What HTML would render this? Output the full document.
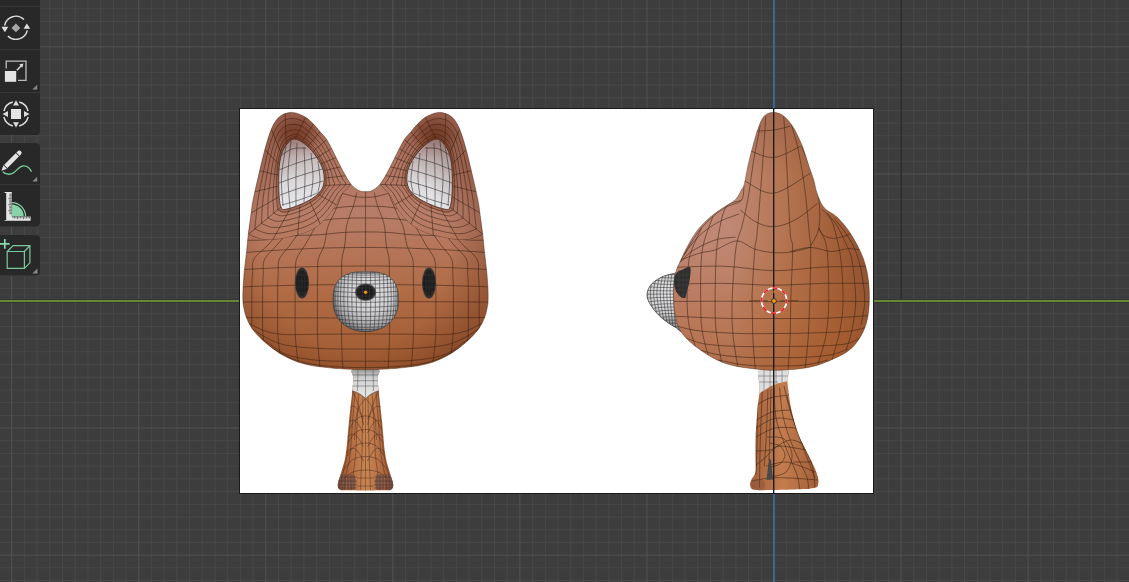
<!DOCTYPE html>
<html><head><meta charset="utf-8"><style>
html,body{margin:0;padding:0;width:1129px;height:582px;overflow:hidden;background:#3d3d3d;}
svg{position:absolute;left:0;top:0;}
</style></head><body>
<svg width="1129" height="582" viewBox="0 0 1129 582">
<rect width="1129" height="582" fill="#3d3d3d"/>
<path d="M-1.00 0V582M24.40 0V582M37.11 0V582M49.81 0V582M62.52 0V582M75.23 0V582M87.93 0V582M100.63 0V582M113.34 0V582M126.04 0V582M151.46 0V582M164.16 0V582M176.87 0V582M189.57 0V582M202.27 0V582M214.98 0V582M227.68 0V582M240.39 0V582M253.10 0V582M278.50 0V582M291.21 0V582M303.92 0V582M316.62 0V582M329.32 0V582M342.03 0V582M354.74 0V582M367.44 0V582M380.14 0V582M405.56 0V582M418.26 0V582M430.96 0V582M443.67 0V582M456.38 0V582M469.08 0V582M481.79 0V582M494.49 0V582M507.19 0V582M532.61 0V582M545.31 0V582M558.01 0V582M570.72 0V582M583.42 0V582M596.13 0V582M608.84 0V582M621.54 0V582M634.25 0V582M659.65 0V582M672.36 0V582M685.07 0V582M697.77 0V582M710.48 0V582M723.18 0V582M735.88 0V582M748.59 0V582M761.29 0V582M786.71 0V582M799.41 0V582M812.12 0V582M824.82 0V582M837.52 0V582M850.23 0V582M862.93 0V582M875.64 0V582M888.35 0V582M913.75 0V582M926.46 0V582M939.16 0V582M951.87 0V582M964.58 0V582M977.28 0V582M989.99 0V582M1002.69 0V582M1015.39 0V582M1040.81 0V582M1053.51 0V582M1066.21 0V582M1078.92 0V582M1091.62 0V582M1104.33 0V582M1117.04 0V582M1129.74 0V582M0 8.79H1129M0 21.49H1129M0 34.19H1129M0 59.60H1129M0 72.31H1129M0 85.01H1129M0 97.72H1129M0 110.43H1129M0 123.13H1129M0 135.84H1129M0 148.54H1129M0 161.25H1129M0 186.66H1129M0 199.36H1129M0 212.06H1129M0 224.77H1129M0 237.47H1129M0 250.18H1129M0 262.88H1129M0 275.59H1129M0 288.30H1129M0 313.70H1129M0 326.41H1129M0 339.12H1129M0 351.82H1129M0 364.52H1129M0 377.23H1129M0 389.94H1129M0 402.64H1129M0 415.35H1129M0 440.75H1129M0 453.46H1129M0 466.16H1129M0 478.87H1129M0 491.57H1129M0 504.28H1129M0 516.99H1129M0 529.69H1129M0 542.39H1129M0 567.81H1129M0 580.51H1129" stroke="#484848" stroke-width="1" fill="none"/>
<path d="M11.70 0V582M138.75 0V582M265.80 0V582M392.85 0V582M519.90 0V582M646.95 0V582M901.05 0V582M1028.10 0V582M0 46.90H1129M0 173.95H1129M0 428.05H1129M0 555.10H1129" stroke="#535353" stroke-width="1" fill="none"/>

<path d="M901.2 0V300" stroke="#2c2c2c" stroke-width="1.6"/>
<rect x="0" y="299" width="1129" height="1" fill="#353535" opacity="0.8"/>
<rect x="0" y="302" width="1129" height="1" fill="#353535" opacity="0.8"/>
<rect x="0" y="300" width="1129" height="2" fill="#618931"/>
<rect x="773" y="0" width="2" height="582" fill="#3f6596"/>

<rect x="239" y="108" width="635" height="386" fill="#1a1a1a"/>
<rect x="240" y="109" width="633" height="384" fill="#ffffff"/>

<defs>
<linearGradient id="gHead" gradientUnits="userSpaceOnUse" x1="0" y1="110" x2="0" y2="372">
<stop offset="0" stop-color="#ac705c"/><stop offset="0.4" stop-color="#b87d68"/><stop offset="0.7" stop-color="#b06b45"/><stop offset="1" stop-color="#a05a30"/>
</linearGradient>
<radialGradient id="gHeadR" gradientUnits="userSpaceOnUse" cx="355" cy="250" r="135" gradientTransform="translate(355 250) scale(1 1.05) translate(-355 -250)">
<stop offset="0.7" stop-color="#3a1000" stop-opacity="0"/><stop offset="1" stop-color="#3a1000" stop-opacity="0.22"/>
</radialGradient>
<linearGradient id="gEar" gradientUnits="userSpaceOnUse" x1="0" y1="135" x2="0" y2="210">
<stop offset="0" stop-color="#a88580"/><stop offset="0.3" stop-color="#c8bcbc"/><stop offset="0.65" stop-color="#dcdadc"/><stop offset="1" stop-color="#e8e8ec"/>
</linearGradient>
<linearGradient id="gSide" gradientUnits="userSpaceOnUse" x1="670" y1="0" x2="872" y2="0">
<stop offset="0" stop-color="#b46f4e"/><stop offset="0.45" stop-color="#b87a5e"/><stop offset="1" stop-color="#9b5433"/>
</linearGradient>
<linearGradient id="gBody" x1="0" y1="0" x2="1" y2="0">
<stop offset="0" stop-color="#a5603a"/><stop offset="0.5" stop-color="#c07a4c"/><stop offset="1" stop-color="#9d5a35"/>
</linearGradient>
<linearGradient id="gNeck" x1="0" y1="0" x2="0" y2="1">
<stop offset="0" stop-color="#a0a0a0"/><stop offset="1" stop-color="#dcdcdc"/>
</linearGradient>
<radialGradient id="gCav"><stop offset="0" stop-color="#5a2008" stop-opacity="0.55"/><stop offset="0.55" stop-color="#5a2008" stop-opacity="0.35"/><stop offset="1" stop-color="#5a2008" stop-opacity="0"/></radialGradient>
<clipPath id="cHead"><path d="M365.5 191.6C363.5 191.6 361.8 192.0 359.4 190.8C357.0 189.6 353.9 187.7 351.1 184.4C348.4 181.1 345.6 176.0 342.9 171.0C340.1 166.0 337.2 159.7 334.6 154.5C332.0 149.3 329.4 143.8 327.0 140.0C324.6 136.2 322.2 134.3 320.0 131.7C317.8 129.1 316.3 126.9 313.9 124.5C311.5 122.1 308.6 119.2 305.7 117.3C302.8 115.4 299.1 114.0 296.4 113.2C293.6 112.4 291.8 112.2 289.2 112.6C286.6 113.0 283.3 114.1 280.9 115.7C278.5 117.3 276.6 119.4 274.7 122.4C272.8 125.4 271.3 129.0 269.6 133.8C267.9 138.6 266.2 144.5 264.4 151.3C262.6 158.1 260.7 166.4 258.8 174.5C256.9 182.6 254.5 192.9 253.1 200.0C251.7 207.1 251.4 211.4 250.6 217.1C249.8 222.8 249.0 228.6 248.3 234.3C247.6 240.0 247.2 245.7 246.6 251.4C246.0 257.1 245.2 262.9 244.6 268.6C244.0 274.3 243.5 280.6 243.2 285.7C242.9 290.8 242.8 295.6 242.9 299.0C243.0 302.4 242.9 303.0 243.5 306.0C244.1 309.0 244.8 313.3 246.2 317.0C247.6 320.7 249.4 324.6 251.7 328.0C254.0 331.4 256.8 334.4 260.0 337.6C263.2 340.8 267.1 344.2 271.0 347.2C274.9 350.2 279.0 353.1 283.4 355.5C287.8 357.9 292.8 360.1 297.1 361.7C301.5 363.3 306.0 364.3 309.5 365.1C313.0 365.9 313.1 365.9 318.0 366.5C322.9 367.1 331.1 368.1 339.0 368.6C346.9 369.2 356.7 369.8 365.5 369.8C374.3 369.8 384.1 369.2 392.0 368.6C399.9 368.1 408.1 367.1 413.0 366.5C417.9 365.9 418.0 365.9 421.5 365.1C425.0 364.3 429.5 363.3 433.9 361.7C438.2 360.1 443.2 357.9 447.6 355.5C452.0 353.1 456.1 350.2 460.0 347.2C463.9 344.2 467.8 340.8 471.0 337.6C474.2 334.4 477.0 331.4 479.3 328.0C481.6 324.6 483.4 320.7 484.8 317.0C486.2 313.3 486.9 309.0 487.5 306.0C488.1 303.0 488.1 302.4 488.1 299.0C488.2 295.6 488.1 290.8 487.8 285.7C487.5 280.6 487.0 274.3 486.4 268.6C485.8 262.9 485.0 257.1 484.4 251.4C483.8 245.7 483.4 240.0 482.7 234.3C482.0 228.6 481.2 222.8 480.4 217.1C479.6 211.4 479.3 207.1 477.9 200.0C476.5 192.9 474.1 182.6 472.2 174.5C470.3 166.4 468.4 158.1 466.6 151.3C464.8 144.5 463.1 138.6 461.4 133.8C459.7 129.0 458.2 125.4 456.3 122.4C454.4 119.4 452.5 117.3 450.1 115.7C447.7 114.1 444.4 113.0 441.8 112.6C439.2 112.2 437.4 112.4 434.6 113.2C431.9 114.0 428.2 115.4 425.3 117.3C422.4 119.2 419.5 122.1 417.1 124.5C414.7 126.9 413.2 129.1 411.0 131.7C408.8 134.3 406.4 136.2 404.0 140.0C401.6 143.8 399.0 149.3 396.4 154.5C393.8 159.7 390.9 166.0 388.1 171.0C385.4 176.0 382.6 181.1 379.9 184.4C377.1 187.7 374.0 189.6 371.6 190.8C369.2 192.0 367.5 191.6 365.5 191.6Z"/></clipPath>
<clipPath id="cEarL"><path d="M248.3 234.3C246.3 231.8 249.2 227.6 249.6 224.3C250.1 221.0 250.5 217.7 251.0 214.3C251.4 211.0 251.8 207.7 252.3 204.4C252.9 201.1 253.5 197.8 254.2 194.5C254.9 191.2 255.7 187.9 256.4 184.7C257.2 181.4 258.0 178.1 258.7 174.9C259.5 171.6 260.2 168.3 261.0 165.1C261.8 161.8 262.5 158.5 263.4 155.3C264.2 152.0 265.0 148.8 266.0 145.5C266.9 142.3 267.8 139.1 268.9 135.9C270.0 132.7 271.0 129.5 272.5 126.5C274.0 123.6 275.6 120.4 278.0 118.1C280.3 115.9 283.5 114.0 286.6 113.2C289.7 112.4 293.3 112.5 296.5 113.2C299.7 113.9 303.5 116.0 305.7 117.3C307.9 118.6 308.5 119.6 309.9 120.8C311.2 122.0 312.6 123.2 313.9 124.5C315.2 125.8 316.3 127.2 317.5 128.6C318.7 130.0 319.8 131.4 321.0 132.8C322.2 134.2 323.5 135.4 324.6 136.8C325.8 138.2 326.8 139.7 327.8 141.3C328.7 142.8 329.5 144.4 330.4 146.1C331.2 147.7 332.0 149.3 332.8 150.9C333.6 152.6 334.5 154.2 335.3 155.8C336.1 157.4 336.9 159.1 337.7 160.7C338.5 162.3 339.3 164.0 340.1 165.6C340.9 167.2 341.7 168.8 342.6 170.4C343.5 172.0 344.4 173.6 345.3 175.2C346.2 176.7 347.2 178.2 348.2 179.8C349.2 181.3 352.2 181.9 351.1 184.4C350.0 186.9 344.2 190.9 341.5 194.7C338.8 198.4 337.5 203.2 334.9 207.1C332.4 211.1 329.5 214.9 326.4 218.3C323.2 221.7 319.7 225.1 315.8 227.6C311.9 230.2 307.5 232.1 303.1 233.6C298.7 235.2 294.0 236.1 289.4 237.1C284.8 238.1 280.2 239.3 275.5 239.7C270.9 240.0 266.0 240.2 261.5 239.3C257.0 238.4 250.3 236.8 248.3 234.3Z"/></clipPath>
<clipPath id="cInnerL"><path d="M281.0 207.1C279.8 204.2 279.2 198.4 278.9 191.7C278.6 185.0 278.6 173.6 279.2 166.9C279.8 160.2 281.0 155.5 282.5 151.5C284.0 147.5 285.9 145.1 288.0 143.0C290.1 140.9 292.0 138.7 295.0 139.0C298.0 139.3 302.4 142.0 306.0 145.0C309.6 148.0 313.6 152.7 316.5 157.0C319.4 161.3 322.2 166.2 323.3 171.0C324.4 175.8 324.5 181.4 323.3 185.5C322.1 189.6 319.6 192.7 316.0 195.8C312.4 198.9 306.6 201.8 301.6 204.0C296.6 206.2 289.5 208.7 286.1 209.2C282.7 209.7 282.2 210.0 281.0 207.1Z"/></clipPath>
</defs>
<g id="front">
<defs><clipPath id="cBody"><path d="M353.2 369.0C349.1 370.5 353.5 374.6 353.4 378.0C353.3 381.4 353.1 382.5 352.4 389.6C351.7 396.8 350.1 410.1 349.0 420.9C347.9 431.7 347.0 445.9 345.7 454.5C344.4 463.1 342.5 467.5 341.2 472.4C339.9 477.3 338.1 481.2 337.8 484.0C337.5 486.8 338.1 488.2 339.5 489.3C340.9 490.4 338.4 490.1 346.0 490.3C353.6 490.5 377.4 490.5 385.0 490.3C392.6 490.1 390.1 490.4 391.5 489.3C392.9 488.2 393.5 486.8 393.2 484.0C392.9 481.2 391.1 477.3 389.8 472.4C388.5 467.5 386.6 463.1 385.3 454.5C384.0 445.9 383.1 431.7 382.0 420.9C380.9 410.1 379.3 396.8 378.6 389.6C377.9 382.5 377.7 381.4 377.6 378.0C377.5 374.6 381.9 370.5 377.8 369.0C373.7 367.5 357.3 367.5 353.2 369.0Z"/></clipPath>
<linearGradient id="gBodyF" gradientUnits="userSpaceOnUse" x1="338" y1="0" x2="394" y2="0"><stop offset="0" stop-color="#94502c"/><stop offset="0.3" stop-color="#bb7448"/><stop offset="0.5" stop-color="#c88452"/><stop offset="0.7" stop-color="#bb7448"/><stop offset="1" stop-color="#94502c"/></linearGradient></defs>
<path d="M353.2 369.0C349.1 370.5 353.5 374.6 353.4 378.0C353.3 381.4 353.1 382.5 352.4 389.6C351.7 396.8 350.1 410.1 349.0 420.9C347.9 431.7 347.0 445.9 345.7 454.5C344.4 463.1 342.5 467.5 341.2 472.4C339.9 477.3 338.1 481.2 337.8 484.0C337.5 486.8 338.1 488.2 339.5 489.3C340.9 490.4 338.4 490.1 346.0 490.3C353.6 490.5 377.4 490.5 385.0 490.3C392.6 490.1 390.1 490.4 391.5 489.3C392.9 488.2 393.5 486.8 393.2 484.0C392.9 481.2 391.1 477.3 389.8 472.4C388.5 467.5 386.6 463.1 385.3 454.5C384.0 445.9 383.1 431.7 382.0 420.9C380.9 410.1 379.3 396.8 378.6 389.6C377.9 382.5 377.7 381.4 377.6 378.0C377.5 374.6 381.9 370.5 377.8 369.0C373.7 367.5 357.3 367.5 353.2 369.0Z" fill="url(#gBodyF)"/>
<g clip-path="url(#cBody)">
<path d="M367.8 389.0C367.9 391.4 368.0 398.6 368.1 403.4C368.2 408.2 368.3 413.0 368.4 417.9C368.5 422.7 368.6 427.5 368.7 432.3C368.7 437.1 368.8 441.9 368.9 446.7C369.0 451.5 369.1 456.3 369.3 461.1C369.5 466.0 369.8 470.8 370.0 475.6C370.2 480.4 370.4 487.6 370.5 490.0M363.2 389.0C363.1 391.4 363.0 398.6 362.9 403.4C362.8 408.2 362.7 413.0 362.6 417.9C362.5 422.7 362.4 427.5 362.3 432.3C362.3 437.1 362.2 441.9 362.1 446.7C362.0 451.5 361.9 456.3 361.7 461.1C361.5 466.0 361.2 470.8 361.0 475.6C360.8 480.4 360.6 487.6 360.5 490.0M372.0 389.0C372.1 391.4 372.5 398.6 372.8 403.4C373.1 408.2 373.3 413.0 373.6 417.9C373.8 422.7 374.0 427.5 374.3 432.3C374.5 437.1 374.6 441.9 374.9 446.7C375.2 451.5 375.5 456.3 376.0 461.1C376.6 466.0 377.5 470.8 378.1 475.6C378.6 480.4 379.1 487.6 379.4 490.0M359.0 389.0C358.9 391.4 358.5 398.6 358.2 403.4C357.9 408.2 357.7 413.0 357.4 417.9C357.2 422.7 357.0 427.5 356.7 432.3C356.5 437.1 356.4 441.9 356.1 446.7C355.8 451.5 355.5 456.3 355.0 461.1C354.4 466.0 353.5 470.8 352.9 475.6C352.4 480.4 351.9 487.6 351.6 490.0M375.7 389.0C375.9 391.4 376.5 398.6 376.9 403.4C377.3 408.2 377.7 413.0 378.1 417.9C378.5 422.7 378.8 427.5 379.2 432.3C379.5 437.1 379.7 441.9 380.2 446.7C380.7 451.5 381.1 456.3 381.9 461.1C382.8 466.0 384.3 470.8 385.1 475.6C386.0 480.4 386.8 487.6 387.1 490.0M355.3 389.0C355.1 391.4 354.5 398.6 354.1 403.4C353.7 408.2 353.3 413.0 352.9 417.9C352.5 422.7 352.2 427.5 351.8 432.3C351.5 437.1 351.3 441.9 350.8 446.7C350.3 451.5 349.9 456.3 349.1 461.1C348.2 466.0 346.7 470.8 345.9 475.6C345.0 480.4 344.2 487.6 343.9 490.0M377.6 389.0C377.9 391.4 378.6 398.6 379.1 403.4C379.6 408.2 380.1 413.0 380.5 417.9C381.0 422.7 381.4 427.5 381.8 432.3C382.2 437.1 382.5 441.9 383.0 446.7C383.6 451.5 384.1 456.3 385.1 461.1C386.1 466.0 387.9 470.8 388.9 475.6C389.9 480.4 390.9 487.6 391.3 490.0M353.4 389.0C353.1 391.4 352.4 398.6 351.9 403.4C351.4 408.2 350.9 413.0 350.5 417.9C350.0 422.7 349.6 427.5 349.2 432.3C348.8 437.1 348.5 441.9 348.0 446.7C347.4 451.5 346.9 456.3 345.9 461.1C344.9 466.0 343.1 470.8 342.1 475.6C341.1 480.4 340.1 487.6 339.7 490.0M365.5 398.0L365.5 491.0M365.5 398.4C366.4 399.6 369.7 403.2 371.1 405.6C372.5 408.0 373.1 410.1 373.8 412.9C374.5 415.7 375.1 417.7 375.5 422.2C375.9 426.7 376.3 437.0 376.5 440.0M379.5 389.0C378.7 390.8 376.0 396.2 374.5 400.0C373.0 403.8 371.7 407.8 370.5 412.0C369.3 416.2 368.0 422.8 367.5 425.0M365.5 398.4C364.6 399.6 361.3 403.2 359.9 405.6C358.5 408.0 357.9 410.1 357.2 412.9C356.5 415.7 355.9 417.7 355.5 422.2C355.1 426.7 354.7 437.0 354.5 440.0M351.5 389.0C352.3 390.8 355.0 396.2 356.5 400.0C358.0 403.8 359.3 407.8 360.5 412.0C361.7 416.2 363.0 422.8 363.5 425.0M349.4 429.0C350.5 427.3 353.5 421.2 356.2 419.0C358.8 416.8 362.4 416.0 365.5 416.0C368.6 416.0 372.2 416.8 374.8 419.0C377.5 421.2 380.5 427.3 381.6 429.0M348.2 442.5C349.5 440.8 352.6 434.7 355.5 432.5C358.4 430.3 362.2 429.5 365.5 429.5C368.8 429.5 372.6 430.3 375.5 432.5C378.4 434.7 381.5 440.8 382.8 442.5M346.9 456.0C348.2 454.3 351.6 448.2 354.7 446.0C357.8 443.8 361.9 443.0 365.5 443.0C369.1 443.0 373.2 443.8 376.3 446.0C379.4 448.2 382.8 454.3 384.1 456.0M344.1 469.5C345.6 467.8 349.5 461.7 353.1 459.5C356.7 457.3 361.4 456.5 365.5 456.5C369.6 456.5 374.3 457.3 377.9 459.5C381.5 461.7 385.4 467.8 386.9 469.5M340.3 483.0C342.1 481.3 346.7 475.2 350.9 473.0C355.1 470.8 360.6 470.0 365.5 470.0C370.4 470.0 375.9 470.8 380.1 473.0C384.3 475.2 388.9 481.3 390.7 483.0M367.5 419.0C368.8 417.0 372.8 408.7 375.5 407.0C378.2 405.3 380.8 406.7 383.5 409.0C386.2 411.3 390.2 419.0 391.5 421.0M367.5 433.0C368.8 431.0 372.8 422.7 375.5 421.0C378.2 419.3 380.8 420.7 383.5 423.0C386.2 425.3 390.2 433.0 391.5 435.0M367.5 447.0C368.8 445.0 372.8 436.7 375.5 435.0C378.2 433.3 380.8 434.7 383.5 437.0C386.2 439.3 390.2 447.0 391.5 449.0M367.5 461.0C368.8 459.0 372.8 450.7 375.5 449.0C378.2 447.3 380.8 448.7 383.5 451.0C386.2 453.3 390.2 461.0 391.5 463.0M363.5 419.0C362.2 417.0 358.2 408.7 355.5 407.0C352.8 405.3 350.2 406.7 347.5 409.0C344.8 411.3 340.8 419.0 339.5 421.0M363.5 433.0C362.2 431.0 358.2 422.7 355.5 421.0C352.8 419.3 350.2 420.7 347.5 423.0C344.8 425.3 340.8 433.0 339.5 435.0M363.5 447.0C362.2 445.0 358.2 436.7 355.5 435.0C352.8 433.3 350.2 434.7 347.5 437.0C344.8 439.3 340.8 447.0 339.5 449.0M363.5 461.0C362.2 459.0 358.2 450.7 355.5 449.0C352.8 447.3 350.2 448.7 347.5 451.0C344.8 453.3 340.8 461.0 339.5 463.0" fill="none" stroke="#3a2418" stroke-width="0.6" stroke-opacity="0.7"/>
<linearGradient id="gNeckF" gradientUnits="userSpaceOnUse" x1="0" y1="369" x2="0" y2="398"><stop offset="0" stop-color="#9a9a9a"/><stop offset="0.35" stop-color="#d4d4d4"/><stop offset="1" stop-color="#e6e6e6"/></linearGradient>
<path d="M348 369H383V390Q373 391 365.5 398.5Q358 391 348 390Z" fill="url(#gNeckF)"/>
<path d="M352.0 375.0L379.0 375.0M352.0 380.7L379.0 380.7M352.0 386.0L379.0 386.0M358.0 369.0L357.5 391.0M365.5 369.0L365.5 398.0M373.0 369.0L373.5 391.0" fill="none" stroke="#4a4a4a" stroke-width="0.6" stroke-opacity="0.8"/>
<path d="M348 390Q358 391 365.5 398.5Q373 391 383 390" fill="none" stroke="#4a3a30" stroke-width="0.7" stroke-opacity="0.8"/>
<g fill="#7a5a52" opacity="0.65"><ellipse cx="341.5" cy="482" rx="5" ry="8.5"/><ellipse cx="351.3" cy="482.5" rx="5" ry="8"/><ellipse cx="379.7" cy="482.5" rx="5" ry="8"/><ellipse cx="389.5" cy="482" rx="5" ry="8.5"/></g>
<path d="M338 477H357M338 481H357M338 485H357M338 488H357M374 477H393M374 481H393M374 485H393M374 488H393M339 474V490M342 474V490M345 474V490M348 474V490M351 474V490M354 474V490M377 474V490M380 474V490M383 474V490M386 474V490M389 474V490M392 474V490" stroke="#3a2a24" stroke-width="0.6" stroke-opacity="0.7"/>
<path d="M357 478H374M357 486H374" stroke="#3a2418" stroke-width="0.6" stroke-opacity="0.6"/>
</g>
<path d="M365.5 191.6C363.5 191.6 361.8 192.0 359.4 190.8C357.0 189.6 353.9 187.7 351.1 184.4C348.4 181.1 345.6 176.0 342.9 171.0C340.1 166.0 337.2 159.7 334.6 154.5C332.0 149.3 329.4 143.8 327.0 140.0C324.6 136.2 322.2 134.3 320.0 131.7C317.8 129.1 316.3 126.9 313.9 124.5C311.5 122.1 308.6 119.2 305.7 117.3C302.8 115.4 299.1 114.0 296.4 113.2C293.6 112.4 291.8 112.2 289.2 112.6C286.6 113.0 283.3 114.1 280.9 115.7C278.5 117.3 276.6 119.4 274.7 122.4C272.8 125.4 271.3 129.0 269.6 133.8C267.9 138.6 266.2 144.5 264.4 151.3C262.6 158.1 260.7 166.4 258.8 174.5C256.9 182.6 254.5 192.9 253.1 200.0C251.7 207.1 251.4 211.4 250.6 217.1C249.8 222.8 249.0 228.6 248.3 234.3C247.6 240.0 247.2 245.7 246.6 251.4C246.0 257.1 245.2 262.9 244.6 268.6C244.0 274.3 243.5 280.6 243.2 285.7C242.9 290.8 242.8 295.6 242.9 299.0C243.0 302.4 242.9 303.0 243.5 306.0C244.1 309.0 244.8 313.3 246.2 317.0C247.6 320.7 249.4 324.6 251.7 328.0C254.0 331.4 256.8 334.4 260.0 337.6C263.2 340.8 267.1 344.2 271.0 347.2C274.9 350.2 279.0 353.1 283.4 355.5C287.8 357.9 292.8 360.1 297.1 361.7C301.5 363.3 306.0 364.3 309.5 365.1C313.0 365.9 313.1 365.9 318.0 366.5C322.9 367.1 331.1 368.1 339.0 368.6C346.9 369.2 356.7 369.8 365.5 369.8C374.3 369.8 384.1 369.2 392.0 368.6C399.9 368.1 408.1 367.1 413.0 366.5C417.9 365.9 418.0 365.9 421.5 365.1C425.0 364.3 429.5 363.3 433.9 361.7C438.2 360.1 443.2 357.9 447.6 355.5C452.0 353.1 456.1 350.2 460.0 347.2C463.9 344.2 467.8 340.8 471.0 337.6C474.2 334.4 477.0 331.4 479.3 328.0C481.6 324.6 483.4 320.7 484.8 317.0C486.2 313.3 486.9 309.0 487.5 306.0C488.1 303.0 488.1 302.4 488.1 299.0C488.2 295.6 488.1 290.8 487.8 285.7C487.5 280.6 487.0 274.3 486.4 268.6C485.8 262.9 485.0 257.1 484.4 251.4C483.8 245.7 483.4 240.0 482.7 234.3C482.0 228.6 481.2 222.8 480.4 217.1C479.6 211.4 479.3 207.1 477.9 200.0C476.5 192.9 474.1 182.6 472.2 174.5C470.3 166.4 468.4 158.1 466.6 151.3C464.8 144.5 463.1 138.6 461.4 133.8C459.7 129.0 458.2 125.4 456.3 122.4C454.4 119.4 452.5 117.3 450.1 115.7C447.7 114.1 444.4 113.0 441.8 112.6C439.2 112.2 437.4 112.4 434.6 113.2C431.9 114.0 428.2 115.4 425.3 117.3C422.4 119.2 419.5 122.1 417.1 124.5C414.7 126.9 413.2 129.1 411.0 131.7C408.8 134.3 406.4 136.2 404.0 140.0C401.6 143.8 399.0 149.3 396.4 154.5C393.8 159.7 390.9 166.0 388.1 171.0C385.4 176.0 382.6 181.1 379.9 184.4C377.1 187.7 374.0 189.6 371.6 190.8C369.2 192.0 367.5 191.6 365.5 191.6Z" fill="url(#gHead)"/>
<g clip-path="url(#cHead)">
<path d="M365.5 192.0C365.5 200.8 365.5 233.8 365.5 245.0C365.5 256.2 365.5 254.4 365.5 259.1C365.5 263.8 365.5 268.5 365.5 273.2C365.5 277.9 365.5 282.6 365.5 287.3C365.5 292.0 365.5 296.7 365.5 301.4C365.5 306.1 365.5 310.9 365.5 315.6C365.5 320.3 365.5 325.0 365.5 329.7C365.5 334.4 365.5 339.1 365.5 343.8C365.5 348.5 365.5 353.2 365.5 357.9C365.5 362.6 365.5 369.6 365.5 372.0M374.2 192.3C374.8 194.5 375.8 200.3 377.5 205.7C379.2 211.1 382.8 218.1 384.2 224.7C385.6 231.2 385.3 239.3 386.2 245.0C387.0 250.7 388.6 254.4 389.1 259.1C389.6 263.8 389.3 268.5 389.4 273.2C389.5 277.9 389.5 282.6 389.6 287.3C389.6 292.0 389.6 296.7 389.6 301.4C389.6 306.1 389.6 310.9 389.6 315.6C389.6 320.3 389.6 325.0 389.6 329.7C389.5 334.4 389.4 339.1 389.3 343.8C389.1 348.5 388.9 353.2 388.7 357.9C388.5 362.6 388.1 369.6 388.0 372.0M356.8 192.3C356.2 194.5 355.2 200.3 353.5 205.7C351.8 211.1 348.2 218.1 346.8 224.7C345.4 231.2 345.7 239.3 344.8 245.0C344.0 250.7 342.4 254.4 341.9 259.1C341.4 263.8 341.7 268.5 341.6 273.2C341.5 277.9 341.5 282.6 341.4 287.3C341.4 292.0 341.4 296.7 341.4 301.4C341.4 306.1 341.4 310.9 341.4 315.6C341.4 320.3 341.4 325.0 341.4 329.7C341.5 334.4 341.6 339.1 341.7 343.8C341.9 348.5 342.1 353.2 342.3 357.9C342.5 362.6 342.9 369.6 343.0 372.0M388.7 193.4C390.0 196.6 394.1 206.8 396.5 212.4C398.9 218.0 401.5 221.5 403.2 226.9C404.9 232.3 405.2 239.6 406.8 245.0C408.4 250.4 411.6 254.4 412.7 259.1C413.8 263.8 413.2 268.5 413.3 273.2C413.5 277.9 413.6 282.6 413.6 287.3C413.7 292.0 413.6 296.7 413.6 301.4C413.6 306.1 413.6 310.9 413.6 315.6C413.6 320.3 413.7 325.0 413.6 329.7C413.5 334.4 413.3 339.1 413.1 343.8C412.8 348.5 412.4 353.2 412.0 357.9C411.5 362.6 410.8 369.6 410.5 372.0M342.3 193.4C341.0 196.6 336.9 206.8 334.5 212.4C332.1 218.0 329.5 221.5 327.8 226.9C326.1 232.3 325.8 239.6 324.2 245.0C322.6 250.4 319.4 254.4 318.3 259.1C317.2 263.8 317.8 268.5 317.7 273.2C317.5 277.9 317.4 282.6 317.4 287.3C317.3 292.0 317.4 296.7 317.4 301.4C317.4 306.1 317.4 310.9 317.4 315.6C317.4 320.3 317.3 325.0 317.4 329.7C317.5 334.4 317.7 339.1 317.9 343.8C318.2 348.5 318.6 353.2 319.0 357.9C319.5 362.6 320.2 369.6 320.5 372.0M409.0 215.0C410.4 217.5 414.6 225.0 417.5 230.0C420.3 235.0 423.1 240.1 425.9 245.0C428.8 249.9 433.0 254.4 434.5 259.1C436.1 263.8 435.2 268.5 435.4 273.2C435.6 277.9 435.8 282.6 435.9 287.3C436.0 292.0 435.9 296.7 435.9 301.4C435.9 306.1 435.9 310.9 435.9 315.6C435.9 320.3 436.1 325.0 435.9 329.7C435.8 334.4 435.5 339.1 435.1 343.8C434.6 348.5 434.1 353.2 433.5 357.9C432.8 362.6 431.7 369.6 431.4 372.0M322.0 215.0C320.6 217.5 316.4 225.0 313.5 230.0C310.7 235.0 307.9 240.1 305.1 245.0C302.2 249.9 298.0 254.4 296.5 259.1C294.9 263.8 295.8 268.5 295.6 273.2C295.4 277.9 295.2 282.6 295.1 287.3C295.0 292.0 295.1 296.7 295.1 301.4C295.1 306.1 295.1 310.9 295.1 315.6C295.1 320.3 294.9 325.0 295.1 329.7C295.2 334.4 295.5 339.1 295.9 343.8C296.4 348.5 296.9 353.2 297.5 357.9C298.2 362.6 299.3 369.6 299.6 372.0M419.8 215.0C421.5 217.5 426.8 225.0 430.3 230.0C433.9 235.0 437.4 240.1 440.9 245.0C444.5 249.9 449.7 254.4 451.6 259.1C453.6 263.8 452.5 268.5 452.8 273.2C453.0 277.9 453.3 282.6 453.4 287.3C453.5 292.0 453.4 296.7 453.4 301.4C453.4 306.1 453.4 310.9 453.4 315.6C453.4 320.3 453.5 325.0 453.4 329.7C453.2 334.4 452.8 339.1 452.3 343.8C451.8 348.5 451.1 353.2 450.3 357.9C449.5 362.6 448.1 369.6 447.7 372.0M311.2 215.0C309.5 217.5 304.2 225.0 300.7 230.0C297.1 235.0 293.6 240.1 290.1 245.0C286.5 249.9 281.3 254.4 279.4 259.1C277.4 263.8 278.5 268.5 278.2 273.2C278.0 277.9 277.7 282.6 277.6 287.3C277.5 292.0 277.6 296.7 277.6 301.4C277.6 306.1 277.6 310.9 277.6 315.6C277.6 320.3 277.5 325.0 277.6 329.7C277.8 334.4 278.2 339.1 278.7 343.8C279.2 348.5 279.9 353.2 280.7 357.9C281.5 362.6 282.9 369.6 283.3 372.0M429.1 215.0C431.1 217.5 437.3 225.0 441.5 230.0C445.6 235.0 449.7 240.1 453.9 245.0C458.0 249.9 464.1 254.4 466.4 259.1C468.7 263.8 467.4 268.5 467.7 273.2C468.0 277.9 468.3 282.6 468.4 287.3C468.5 292.0 468.4 296.7 468.4 301.4C468.4 306.1 468.4 310.9 468.4 315.6C468.4 320.3 468.6 325.0 468.4 329.7C468.2 334.4 467.8 339.1 467.2 343.8C466.6 348.5 465.7 353.2 464.8 357.9C463.9 362.6 462.3 369.6 461.8 372.0M301.9 215.0C299.9 217.5 293.7 225.0 289.5 230.0C285.4 235.0 281.3 240.1 277.1 245.0C273.0 249.9 266.9 254.4 264.6 259.1C262.3 263.8 263.6 268.5 263.3 273.2C263.0 277.9 262.7 282.6 262.6 287.3C262.5 292.0 262.6 296.7 262.6 301.4C262.6 306.1 262.6 310.9 262.6 315.6C262.6 320.3 262.4 325.0 262.6 329.7C262.8 334.4 263.2 339.1 263.8 343.8C264.4 348.5 265.3 353.2 266.2 357.9C267.1 362.6 268.7 369.6 269.2 372.0M435.7 215.0C438.0 217.5 444.9 225.0 449.4 230.0C454.0 235.0 458.6 240.1 463.1 245.0C467.7 249.9 474.5 254.4 477.0 259.1C479.6 263.8 478.1 268.5 478.4 273.2C478.8 277.9 479.1 282.6 479.2 287.3C479.4 292.0 479.2 296.7 479.2 301.4C479.2 306.1 479.2 310.9 479.2 315.6C479.2 320.3 479.5 325.0 479.2 329.7C479.0 334.4 478.5 339.1 477.9 343.8C477.2 348.5 476.3 353.2 475.3 357.9C474.3 362.6 472.5 369.6 471.9 372.0M295.3 215.0C293.0 217.5 286.1 225.0 281.6 230.0C277.0 235.0 272.4 240.1 267.9 245.0C263.3 249.9 256.5 254.4 254.0 259.1C251.4 263.8 252.9 268.5 252.6 273.2C252.2 277.9 251.9 282.6 251.8 287.3C251.6 292.0 251.8 296.7 251.8 301.4C251.8 306.1 251.8 310.9 251.8 315.6C251.8 320.3 251.5 325.0 251.8 329.7C252.0 334.4 252.5 339.1 253.1 343.8C253.8 348.5 254.7 353.2 255.7 357.9C256.7 362.6 258.5 369.6 259.1 372.0M342.3 193.4C344.5 193.9 351.8 196.0 355.7 196.7C359.6 197.3 362.2 197.3 365.5 197.3C368.8 197.3 371.4 197.3 375.3 196.7C379.2 196.0 386.5 193.9 388.7 193.4M290.0 226.0C295.0 223.7 312.8 215.3 320.0 212.4C327.2 209.5 328.8 209.5 333.4 208.5C338.0 207.5 342.5 207.0 347.9 206.6C353.2 206.2 359.6 206.2 365.5 206.2C371.4 206.2 377.8 206.2 383.1 206.6C388.5 207.0 393.0 207.5 397.6 208.5C402.2 209.5 403.8 209.5 411.0 212.4C418.2 215.3 436.0 223.7 441.0 226.0M280.0 234.0C286.7 231.9 309.6 223.9 320.0 221.3C330.4 218.7 334.7 219.1 342.3 218.5C349.9 217.9 357.8 218.0 365.5 218.0C373.2 218.0 381.1 217.9 388.7 218.5C396.3 219.1 400.6 218.7 411.0 221.3C421.4 223.9 444.3 231.9 451.0 234.0M236.0 240.0C240.8 240.0 255.9 240.6 264.9 239.9C273.9 239.2 280.8 236.9 290.0 236.0C299.2 235.1 311.3 235.3 320.0 234.7C328.7 234.1 334.7 233.0 342.3 232.5C349.9 232.0 357.8 231.9 365.5 231.9C373.2 231.9 381.1 232.0 388.7 232.5C396.3 233.0 402.3 234.1 411.0 234.7C419.7 235.3 431.8 235.1 441.0 236.0C450.2 236.9 457.1 239.2 466.1 239.9C475.1 240.6 490.2 240.0 495.0 240.0M236.0 253.3C238.9 253.1 247.5 252.3 253.3 251.9C259.0 251.4 264.8 251.0 270.5 250.6C276.3 250.3 282.0 249.9 287.8 249.6C293.6 249.3 299.3 249.0 305.1 248.8C310.8 248.5 316.6 248.3 322.3 248.1C328.1 248.0 333.8 247.8 339.6 247.7C345.4 247.6 351.1 247.6 356.9 247.5C362.6 247.5 368.4 247.5 374.1 247.5C379.9 247.6 385.6 247.6 391.4 247.7C397.2 247.8 402.9 248.0 408.7 248.1C414.4 248.3 420.2 248.5 425.9 248.8C431.7 249.0 437.4 249.3 443.2 249.6C449.0 249.9 454.7 250.3 460.5 250.6C466.2 251.0 472.0 251.4 477.7 251.9C483.5 252.3 492.1 253.1 495.0 253.3M236.0 270.0C238.9 269.8 247.5 269.3 253.3 269.0C259.0 268.7 264.8 268.4 270.5 268.1C276.3 267.9 282.0 267.6 287.8 267.4C293.6 267.2 299.3 267.0 305.1 266.9C310.8 266.7 316.6 266.6 322.3 266.4C328.1 266.3 333.8 266.2 339.6 266.2C345.4 266.1 351.1 266.0 356.9 266.0C362.6 266.0 368.4 266.0 374.1 266.0C379.9 266.0 385.6 266.1 391.4 266.2C397.2 266.2 402.9 266.3 408.7 266.4C414.4 266.6 420.2 266.7 425.9 266.9C431.7 267.0 437.4 267.2 443.2 267.4C449.0 267.6 454.7 267.9 460.5 268.1C466.2 268.4 472.0 268.7 477.7 269.0C483.5 269.3 492.1 269.8 495.0 270.0M236.0 287.1C238.9 287.0 247.5 286.6 253.3 286.4C259.0 286.2 264.8 286.0 270.5 285.9C276.3 285.7 282.0 285.6 287.8 285.4C293.6 285.3 299.3 285.2 305.1 285.1C310.8 285.0 316.6 284.9 322.3 284.8C328.1 284.7 333.8 284.6 339.6 284.6C345.4 284.6 351.1 284.5 356.9 284.5C362.6 284.5 368.4 284.5 374.1 284.5C379.9 284.5 385.6 284.6 391.4 284.6C397.2 284.6 402.9 284.7 408.7 284.8C414.4 284.9 420.2 285.0 425.9 285.1C431.7 285.2 437.4 285.3 443.2 285.4C449.0 285.6 454.7 285.7 460.5 285.9C466.2 286.0 472.0 286.2 477.7 286.4C483.5 286.6 492.1 287.0 495.0 287.1M236.0 302.2C238.9 302.2 247.5 302.1 253.3 302.0C259.0 302.0 264.8 302.0 270.5 301.9C276.3 301.9 282.0 301.8 287.8 301.8C293.6 301.8 299.3 301.8 305.1 301.7C310.8 301.7 316.6 301.7 322.3 301.7C328.1 301.6 333.8 301.6 339.6 301.6C345.4 301.6 351.1 301.6 356.9 301.6C362.6 301.6 368.4 301.6 374.1 301.6C379.9 301.6 385.6 301.6 391.4 301.6C397.2 301.6 402.9 301.6 408.7 301.7C414.4 301.7 420.2 301.7 425.9 301.7C431.7 301.8 437.4 301.8 443.2 301.8C449.0 301.8 454.7 301.9 460.5 301.9C466.2 302.0 472.0 302.0 477.7 302.0C483.5 302.1 492.1 302.2 495.0 302.2M236.0 317.4C238.9 317.4 247.5 317.5 253.3 317.6C259.0 317.6 264.8 317.6 270.5 317.7C276.3 317.7 282.0 317.8 287.8 317.8C293.6 317.8 299.3 317.8 305.1 317.9C310.8 317.9 316.6 317.9 322.3 317.9C328.1 318.0 333.8 318.0 339.6 318.0C345.4 318.0 351.1 318.0 356.9 318.0C362.6 318.0 368.4 318.0 374.1 318.0C379.9 318.0 385.6 318.0 391.4 318.0C397.2 318.0 402.9 318.0 408.7 317.9C414.4 317.9 420.2 317.9 425.9 317.9C431.7 317.8 437.4 317.8 443.2 317.8C449.0 317.8 454.7 317.7 460.5 317.7C466.2 317.6 472.0 317.6 477.7 317.6C483.5 317.5 492.1 317.4 495.0 317.4M236.0 319.0C237.7 319.5 241.4 320.0 246.2 322.0C251.0 324.0 258.5 328.9 265.0 331.0C271.5 333.1 276.2 334.0 285.4 334.5C294.6 335.0 306.6 334.3 320.0 334.2C333.4 334.1 350.3 334.0 365.5 334.0C380.7 334.0 397.6 334.1 411.0 334.2C424.4 334.3 436.4 335.0 445.6 334.5C454.8 334.0 459.5 333.1 466.0 331.0C472.5 328.9 480.0 324.0 484.8 322.0C489.6 320.0 493.3 319.5 495.0 319.0M240.0 322.0C241.6 322.8 245.3 324.5 249.5 327.0C253.7 329.5 259.0 334.0 265.0 337.0C271.0 340.0 276.2 343.1 285.4 345.0C294.6 346.9 306.6 347.8 320.0 348.5C333.4 349.2 350.3 349.0 365.5 349.0C380.7 349.0 397.6 349.2 411.0 348.5C424.4 347.8 436.4 346.9 445.6 345.0C454.8 343.1 460.0 340.0 466.0 337.0C472.0 334.0 477.3 329.5 481.5 327.0C485.7 324.5 489.4 322.8 491.0 322.0M252.0 331.0C254.7 333.0 262.0 339.0 268.0 343.0C274.0 347.0 279.3 352.1 288.0 355.0C296.7 357.9 307.1 359.5 320.0 360.5C332.9 361.5 350.3 361.2 365.5 361.2C380.7 361.2 398.1 361.5 411.0 360.5C423.9 359.5 434.3 357.9 443.0 355.0C451.7 352.1 457.0 347.0 463.0 343.0C469.0 339.0 476.3 333.0 479.0 331.0M258.0 337.0C260.8 339.2 268.0 345.9 275.0 350.0C282.0 354.1 290.8 358.8 300.0 361.5C309.2 364.2 319.1 365.3 330.0 366.3C340.9 367.3 353.7 367.6 365.5 367.6C377.3 367.6 390.1 367.3 401.0 366.3C411.9 365.3 421.8 364.2 431.0 361.5C440.2 358.8 449.0 354.1 456.0 350.0C463.0 345.9 470.2 339.2 473.0 337.0" fill="none" stroke="#3a2418" stroke-width="0.7" stroke-opacity="0.8"/>
<g clip-path="url(#cEarL)"><path d="M248.3 234.3C246.3 231.8 249.2 227.6 249.6 224.3C250.1 221.0 250.5 217.7 251.0 214.3C251.4 211.0 251.8 207.7 252.3 204.4C252.9 201.1 253.5 197.8 254.2 194.5C254.9 191.2 255.7 187.9 256.4 184.7C257.2 181.4 258.0 178.1 258.7 174.9C259.5 171.6 260.2 168.3 261.0 165.1C261.8 161.8 262.5 158.5 263.4 155.3C264.2 152.0 265.0 148.8 266.0 145.5C266.9 142.3 267.8 139.1 268.9 135.9C270.0 132.7 271.0 129.5 272.5 126.5C274.0 123.6 275.6 120.4 278.0 118.1C280.3 115.9 283.5 114.0 286.6 113.2C289.7 112.4 293.3 112.5 296.5 113.2C299.7 113.9 303.5 116.0 305.7 117.3C307.9 118.6 308.5 119.6 309.9 120.8C311.2 122.0 312.6 123.2 313.9 124.5C315.2 125.8 316.3 127.2 317.5 128.6C318.7 130.0 319.8 131.4 321.0 132.8C322.2 134.2 323.5 135.4 324.6 136.8C325.8 138.2 326.8 139.7 327.8 141.3C328.7 142.8 329.5 144.4 330.4 146.1C331.2 147.7 332.0 149.3 332.8 150.9C333.6 152.6 334.5 154.2 335.3 155.8C336.1 157.4 336.9 159.1 337.7 160.7C338.5 162.3 339.3 164.0 340.1 165.6C340.9 167.2 341.7 168.8 342.6 170.4C343.5 172.0 344.4 173.6 345.3 175.2C346.2 176.7 347.2 178.2 348.2 179.8C349.2 181.3 352.2 181.9 351.1 184.4C350.0 186.9 344.2 190.9 341.5 194.7C338.8 198.4 337.5 203.2 334.9 207.1C332.4 211.1 329.5 214.9 326.4 218.3C323.2 221.7 319.7 225.1 315.8 227.6C311.9 230.2 307.5 232.1 303.1 233.6C298.7 235.2 294.0 236.1 289.4 237.1C284.8 238.1 280.2 239.3 275.5 239.7C270.9 240.0 266.0 240.2 261.5 239.3C257.0 238.4 250.3 236.8 248.3 234.3Z" fill="url(#gHead)"/>
<path d="M281.0 207.1C280.9 206.3 280.4 203.8 280.1 202.2C279.9 200.6 279.6 198.9 279.4 197.3C279.2 195.7 279.0 194.0 278.9 192.4C278.8 190.7 278.8 189.0 278.8 187.4C278.7 185.7 278.7 184.1 278.7 182.4C278.7 180.8 278.7 179.1 278.7 177.5C278.8 175.8 278.8 174.2 278.9 172.5C278.9 170.8 279.0 169.2 279.2 167.5C279.3 165.9 279.5 164.2 279.7 162.6C280.0 161.0 280.3 159.3 280.6 157.7C281.0 156.1 281.4 154.5 282.0 153.0C282.5 151.4 283.1 149.8 283.9 148.4C284.7 146.9 285.6 145.5 286.7 144.3C287.9 143.1 289.2 142.1 290.5 141.2C291.9 140.3 293.7 139.1 295.0 139.0C296.3 138.9 297.4 140.1 298.6 140.6C299.7 141.2 300.9 141.7 302.1 142.4C303.2 143.0 304.3 143.7 305.4 144.5C306.4 145.3 307.4 146.2 308.3 147.1C309.2 148.0 310.1 148.9 311.0 149.9C311.9 150.9 312.7 151.9 313.5 152.9C314.3 153.9 315.1 155.0 315.9 156.1C316.6 157.1 317.3 158.2 318.0 159.3C318.7 160.4 319.4 161.6 320.0 162.7C320.6 163.9 321.2 165.0 321.7 166.2C322.2 167.4 322.7 168.7 323.0 169.9C323.3 171.2 323.6 172.5 323.7 173.8C323.8 175.1 323.8 176.4 323.8 177.7C323.8 179.0 323.6 180.3 323.6 181.6C323.5 182.9 323.8 184.0 323.3 185.5C322.8 187.0 321.4 188.8 320.4 190.4C319.3 192.0 318.2 193.6 316.9 194.9C315.6 196.3 314.0 197.4 312.4 198.4C310.8 199.5 309.1 200.3 307.4 201.2C305.7 202.1 304.0 202.9 302.2 203.7C300.5 204.5 298.7 205.2 297.0 205.9C295.2 206.6 293.4 207.3 291.6 207.8C289.7 208.4 287.8 209.3 286.0 209.2C284.3 209.1 281.8 207.5 281.0 207.1M277.7 209.8C277.6 208.9 277.3 206.2 277.1 204.4C276.9 202.6 276.7 200.8 276.6 199.0C276.4 197.2 276.3 195.4 276.3 193.6C276.2 191.7 276.3 189.9 276.3 188.1C276.3 186.3 276.4 184.5 276.5 182.7C276.5 180.8 276.6 179.0 276.7 177.2C276.8 175.4 276.9 173.6 277.1 171.8C277.2 169.9 277.4 168.1 277.6 166.3C277.8 164.5 278.0 162.7 278.3 160.9C278.6 159.1 279.0 157.3 279.5 155.6C279.9 153.8 280.4 152.0 281.0 150.3C281.7 148.6 282.4 146.9 283.3 145.4C284.3 143.8 285.4 142.4 286.7 141.2C288.0 140.0 289.6 139.1 291.1 138.4C292.7 137.6 294.6 136.8 296.1 136.8C297.5 136.9 298.5 138.0 299.7 138.7C300.9 139.3 302.1 139.9 303.2 140.6C304.4 141.3 305.5 142.1 306.6 142.9C307.6 143.8 308.6 144.7 309.6 145.7C310.5 146.6 311.5 147.6 312.4 148.6C313.3 149.6 314.1 150.7 314.9 151.8C315.8 152.8 316.5 153.9 317.3 155.1C318.1 156.2 318.8 157.3 319.5 158.5C320.2 159.7 320.9 160.8 321.5 162.0C322.1 163.2 322.7 164.4 323.3 165.7C323.8 166.9 324.3 168.2 324.7 169.5C325.1 170.8 325.4 172.1 325.6 173.4C325.8 174.8 325.9 176.1 325.9 177.4C326.0 178.8 326.0 180.1 326.0 181.4C326.0 182.7 326.7 183.8 326.1 185.4C325.5 187.0 323.7 189.0 322.5 190.8C321.3 192.6 320.2 194.6 318.7 196.2C317.3 197.8 315.5 199.1 313.8 200.4C312.0 201.7 310.1 202.8 308.2 203.9C306.3 204.9 304.3 205.8 302.3 206.7C300.3 207.6 298.3 208.3 296.2 209.0C294.1 209.7 292.1 210.5 290.0 211.0C287.9 211.5 285.6 212.4 283.6 212.2C281.5 212.0 278.7 210.2 277.7 209.8M273.8 213.1C273.7 212.1 273.5 209.1 273.4 207.1C273.3 205.1 273.2 203.1 273.1 201.1C273.1 199.0 273.0 197.0 273.1 195.0C273.1 193.0 273.2 191.0 273.4 189.0C273.5 186.9 273.6 184.9 273.8 182.9C274.0 180.9 274.1 178.9 274.3 176.9C274.5 174.9 274.7 172.9 274.9 170.9C275.2 168.9 275.4 166.8 275.7 164.8C276.0 162.8 276.3 160.8 276.7 158.9C277.1 156.9 277.5 154.9 278.0 152.9C278.6 151.0 279.1 149.0 279.9 147.1C280.7 145.3 281.5 143.3 282.6 141.7C283.7 140.1 285.2 138.6 286.7 137.5C288.3 136.4 290.1 135.6 291.8 135.0C293.6 134.5 295.8 134.0 297.4 134.2C298.9 134.4 299.8 135.6 301.0 136.3C302.3 137.0 303.5 137.7 304.7 138.5C305.8 139.2 307.0 140.1 308.0 141.0C309.1 141.9 310.1 142.9 311.1 143.9C312.1 144.9 313.1 146.0 314.0 147.0C314.9 148.1 315.8 149.2 316.7 150.4C317.5 151.5 318.3 152.7 319.0 153.9C319.8 155.0 320.5 156.3 321.3 157.5C322.0 158.7 322.7 159.9 323.3 161.2C324.0 162.5 324.6 163.7 325.2 165.0C325.8 166.3 326.3 167.6 326.8 169.0C327.2 170.3 327.6 171.7 327.9 173.0C328.2 174.4 328.3 175.8 328.5 177.1C328.7 178.5 328.8 179.8 329.0 181.2C329.1 182.6 330.1 183.6 329.4 185.3C328.8 186.9 326.4 189.3 325.0 191.3C323.6 193.4 322.5 195.7 320.9 197.6C319.3 199.5 317.4 201.2 315.5 202.8C313.5 204.4 311.4 205.8 309.2 207.0C307.1 208.3 304.8 209.3 302.4 210.3C300.1 211.2 297.7 212.0 295.3 212.8C292.9 213.5 290.5 214.3 288.0 214.8C285.6 215.3 283.0 216.1 280.6 215.8C278.3 215.5 274.9 213.5 273.8 213.1M267.9 218.0C267.9 216.8 267.9 213.4 267.9 211.1C268.0 208.7 268.0 206.4 268.0 204.1C268.1 201.8 268.1 199.5 268.3 197.2C268.4 194.8 268.7 192.5 269.0 190.2C269.2 187.9 269.5 185.6 269.8 183.3C270.1 181.0 270.4 178.7 270.7 176.4C271.0 174.1 271.4 171.8 271.7 169.5C272.1 167.2 272.4 164.9 272.8 162.6C273.3 160.3 273.7 158.1 274.2 155.8C274.7 153.5 275.3 151.2 275.9 149.0C276.6 146.8 277.3 144.5 278.2 142.4C279.1 140.3 280.1 138.0 281.5 136.3C282.9 134.5 284.8 132.9 286.7 131.9C288.6 130.8 290.8 130.2 292.9 130.0C295.0 129.7 297.6 129.9 299.3 130.3C301.0 130.8 301.8 131.9 303.1 132.7C304.3 133.5 305.6 134.3 306.8 135.2C308.0 136.1 309.1 137.1 310.2 138.1C311.3 139.2 312.3 140.3 313.4 141.4C314.4 142.5 315.5 143.5 316.5 144.7C317.4 145.8 318.4 147.0 319.2 148.3C320.1 149.5 320.9 150.8 321.7 152.1C322.4 153.3 323.2 154.7 323.9 156.0C324.7 157.3 325.4 158.6 326.1 160.0C326.8 161.3 327.4 162.7 328.1 164.0C328.7 165.4 329.3 166.8 329.8 168.2C330.4 169.6 330.8 171.0 331.3 172.4C331.7 173.8 332.0 175.3 332.4 176.7C332.8 178.1 333.1 179.5 333.4 180.9C333.7 182.3 335.2 183.2 334.4 185.1C333.7 186.9 330.5 189.6 328.8 192.1C327.1 194.6 325.9 197.4 324.1 199.8C322.3 202.2 320.2 204.4 318.0 206.4C315.7 208.4 313.3 210.2 310.8 211.8C308.2 213.3 305.4 214.6 302.6 215.7C299.8 216.8 296.8 217.6 293.9 218.4C291.0 219.2 288.1 220.1 285.2 220.5C282.2 221.0 279.1 221.7 276.2 221.2C273.3 220.8 269.3 218.5 267.9 218.0M261.4 223.4C261.5 222.1 261.7 218.1 261.8 215.5C262.0 212.8 262.1 210.2 262.3 207.5C262.5 204.9 262.7 202.2 263.0 199.6C263.3 196.9 263.7 194.3 264.0 191.7C264.4 189.0 264.9 186.4 265.3 183.8C265.8 181.1 266.3 178.5 266.7 175.9C267.2 173.3 267.7 170.7 268.1 168.0C268.6 165.4 269.1 162.8 269.7 160.2C270.2 157.6 270.8 155.0 271.5 152.4C272.1 149.8 272.8 147.2 273.6 144.6C274.4 142.1 275.2 139.5 276.3 137.1C277.4 134.7 278.6 132.1 280.3 130.2C282.1 128.3 284.4 126.6 286.7 125.6C289.0 124.7 291.7 124.3 294.1 124.4C296.6 124.5 299.5 125.3 301.4 126.0C303.3 126.7 304.0 127.8 305.3 128.8C306.6 129.7 307.9 130.6 309.2 131.7C310.4 132.7 311.5 133.8 312.6 135.0C313.8 136.1 314.8 137.3 315.9 138.5C317.0 139.7 318.2 140.8 319.2 142.1C320.2 143.3 321.2 144.6 322.1 145.9C323.0 147.3 323.8 148.7 324.6 150.1C325.4 151.5 326.1 152.9 326.9 154.3C327.6 155.7 328.4 157.1 329.1 158.6C329.9 160.0 330.6 161.5 331.3 162.9C332.0 164.4 332.6 165.8 333.3 167.3C333.9 168.8 334.5 170.3 335.0 171.8C335.6 173.2 336.2 174.7 336.7 176.2C337.3 177.6 337.8 179.1 338.3 180.5C338.9 182.0 340.9 182.8 340.0 184.8C339.1 186.9 335.1 190.1 333.0 193.0C331.0 195.9 329.8 199.4 327.7 202.3C325.7 205.2 323.3 207.9 320.8 210.4C318.2 212.8 315.4 215.2 312.4 217.1C309.4 219.0 306.1 220.4 302.7 221.7C299.4 222.9 295.9 223.7 292.4 224.6C289.0 225.5 285.5 226.5 281.9 226.9C278.4 227.3 274.7 227.8 271.3 227.2C267.9 226.7 263.0 224.1 261.4 223.4M254.8 228.9C255.0 227.4 255.4 222.9 255.7 219.9C256.0 216.9 256.3 213.9 256.7 210.9C257.0 207.9 257.2 204.9 257.6 202.0C258.1 199.0 258.6 196.0 259.1 193.1C259.7 190.1 260.3 187.2 260.9 184.2C261.5 181.3 262.1 178.3 262.7 175.4C263.3 172.4 263.9 169.5 264.6 166.5C265.2 163.6 265.8 160.7 266.5 157.7C267.2 154.8 267.9 151.9 268.7 149.0C269.5 146.1 270.3 143.1 271.2 140.3C272.2 137.4 273.1 134.5 274.4 131.8C275.7 129.1 277.1 126.3 279.2 124.2C281.2 122.1 283.9 120.3 286.6 119.4C289.3 118.5 292.5 118.4 295.3 118.8C298.1 119.2 301.5 120.6 303.6 121.6C305.6 122.6 306.3 123.7 307.6 124.8C308.9 125.9 310.3 126.9 311.5 128.1C312.8 129.2 313.9 130.5 315.1 131.8C316.2 133.0 317.3 134.4 318.4 135.6C319.6 136.9 320.8 138.1 321.9 139.4C323.0 140.8 324.0 142.2 324.9 143.6C325.9 145.0 326.6 146.6 327.5 148.1C328.3 149.6 329.1 151.1 329.8 152.6C330.6 154.1 331.4 155.7 332.2 157.2C333.0 158.7 333.7 160.3 334.5 161.8C335.2 163.4 335.9 164.9 336.7 166.5C337.4 168.0 338.1 169.6 338.8 171.1C339.5 172.6 340.3 174.2 341.0 175.7C341.8 177.2 342.5 178.7 343.3 180.2C344.0 181.6 346.5 182.3 345.5 184.6C344.5 186.9 339.6 190.5 337.3 193.8C334.9 197.2 333.6 201.3 331.3 204.7C329.0 208.1 326.4 211.4 323.6 214.3C320.7 217.3 317.6 220.1 314.1 222.4C310.7 224.6 306.8 226.2 302.9 227.6C299.0 229.1 294.9 229.9 290.9 230.8C286.9 231.8 282.8 232.9 278.7 233.3C274.6 233.7 270.4 234.0 266.4 233.3C262.4 232.5 256.8 229.6 254.8 228.9M351.1 184.4C349.5 186.1 344.2 190.9 341.5 194.7C338.8 198.4 337.5 203.2 334.9 207.1C332.4 211.1 329.5 214.9 326.4 218.3C323.2 221.7 319.7 225.1 315.8 227.6C311.9 230.2 307.5 232.1 303.1 233.6C298.7 235.2 294.0 236.1 289.4 237.1C284.8 238.1 280.2 239.3 275.5 239.7C270.9 240.0 266.0 240.2 261.5 239.3C257.0 238.4 250.5 235.1 248.3 234.3" fill="none" stroke="#3a2418" stroke-width="0.7" stroke-opacity="0.8"/>
<path d="M281.0 207.1L248.3 234.3M279.3 196.6L251.1 212.9M278.7 186.0L254.8 191.7M278.8 175.3L259.7 170.7M279.4 164.7L264.8 149.7M281.6 154.3L271.4 129.2M286.3 144.9L285.2 113.6M295.0 139.0L305.7 117.3M301.6 142.2L313.4 124.0M307.6 146.4L320.1 131.8M312.6 151.8L326.7 139.5M316.9 157.7L331.6 148.5M320.6 164.0L336.2 157.6M323.3 170.9L340.7 166.8M323.8 178.2L345.7 175.7M323.3 185.5L351.1 184.4M317.7 194.1L336.3 204.7M309.4 200.2L320.3 224.2M300.1 204.6L297.7 235.2M290.5 208.1L272.7 239.9" fill="none" stroke="#3a2418" stroke-width="0.7" stroke-opacity="0.8"/>
<ellipse cx="296" cy="136" rx="24" ry="21" fill="url(#gCav)"/>
<path d="M281.0 207.1C279.8 204.2 279.2 198.4 278.9 191.7C278.6 185.0 278.6 173.6 279.2 166.9C279.8 160.2 281.0 155.5 282.5 151.5C284.0 147.5 285.9 145.1 288.0 143.0C290.1 140.9 292.0 138.7 295.0 139.0C298.0 139.3 302.4 142.0 306.0 145.0C309.6 148.0 313.6 152.7 316.5 157.0C319.4 161.3 322.2 166.2 323.3 171.0C324.4 175.8 324.5 181.4 323.3 185.5C322.1 189.6 319.6 192.7 316.0 195.8C312.4 198.9 306.6 201.8 301.6 204.0C296.6 206.2 289.5 208.7 286.1 209.2C282.7 209.7 282.2 210.0 281.0 207.1Z" fill="none" stroke="#6a3a28" stroke-width="6" stroke-opacity="0.28"/>
<path d="M281.0 207.1C279.8 204.2 279.2 198.4 278.9 191.7C278.6 185.0 278.6 173.6 279.2 166.9C279.8 160.2 281.0 155.5 282.5 151.5C284.0 147.5 285.9 145.1 288.0 143.0C290.1 140.9 292.0 138.7 295.0 139.0C298.0 139.3 302.4 142.0 306.0 145.0C309.6 148.0 313.6 152.7 316.5 157.0C319.4 161.3 322.2 166.2 323.3 171.0C324.4 175.8 324.5 181.4 323.3 185.5C322.1 189.6 319.6 192.7 316.0 195.8C312.4 198.9 306.6 201.8 301.6 204.0C296.6 206.2 289.5 208.7 286.1 209.2C282.7 209.7 282.2 210.0 281.0 207.1Z" fill="url(#gEar)"/>
<g clip-path="url(#cInnerL)"><path d="M286.0 146.0C285.2 151.2 282.0 167.0 281.5 177.0C281.0 187.0 282.8 201.2 283.0 206.0M291.0 141.0C290.5 146.7 288.2 163.8 288.0 175.0C287.8 186.2 289.7 202.5 290.0 208.0M297.0 143.0C296.8 148.3 296.2 164.5 296.0 175.0C295.8 185.5 296.0 200.8 296.0 206.0M304.0 147.0C304.2 151.8 305.0 166.8 305.0 176.0C305.0 185.2 304.2 197.7 304.0 202.0M311.0 153.0C311.3 157.0 313.0 169.7 313.0 177.0C313.0 184.3 311.3 193.7 311.0 197.0M318.0 161.0C318.3 164.2 320.0 174.8 320.0 180.0C320.0 185.2 318.3 190.0 318.0 192.0M279.0 157.0C281.2 155.7 287.5 150.5 292.0 149.0C296.5 147.5 303.7 148.2 306.0 148.0M279.0 170.0C282.0 168.8 290.5 165.2 297.0 163.0C303.5 160.8 314.5 158.0 318.0 157.0M279.0 183.0C282.3 181.8 291.8 178.3 299.0 176.0C306.2 173.7 318.2 170.2 322.0 169.0M280.0 195.0C283.3 193.8 292.8 190.3 300.0 188.0C307.2 185.7 319.2 182.2 323.0 181.0M282.0 205.0C285.3 204.0 295.7 201.2 302.0 199.0C308.3 196.8 317.0 193.2 320.0 192.0" fill="none" stroke="#2a2a2a" stroke-width="0.7" stroke-opacity="0.8"/></g>
<path d="M281.0 207.1C279.8 204.2 279.2 198.4 278.9 191.7C278.6 185.0 278.6 173.6 279.2 166.9C279.8 160.2 281.0 155.5 282.5 151.5C284.0 147.5 285.9 145.1 288.0 143.0C290.1 140.9 292.0 138.7 295.0 139.0C298.0 139.3 302.4 142.0 306.0 145.0C309.6 148.0 313.6 152.7 316.5 157.0C319.4 161.3 322.2 166.2 323.3 171.0C324.4 175.8 324.5 181.4 323.3 185.5C322.1 189.6 319.6 192.7 316.0 195.8C312.4 198.9 306.6 201.8 301.6 204.0C296.6 206.2 289.5 208.7 286.1 209.2C282.7 209.7 282.2 210.0 281.0 207.1Z" fill="none" stroke="#5a3a30" stroke-width="0.9"/>
</g>
<g transform="translate(731 0) scale(-1 1)"><g clip-path="url(#cEarL)"><path d="M248.3 234.3C246.3 231.8 249.2 227.6 249.6 224.3C250.1 221.0 250.5 217.7 251.0 214.3C251.4 211.0 251.8 207.7 252.3 204.4C252.9 201.1 253.5 197.8 254.2 194.5C254.9 191.2 255.7 187.9 256.4 184.7C257.2 181.4 258.0 178.1 258.7 174.9C259.5 171.6 260.2 168.3 261.0 165.1C261.8 161.8 262.5 158.5 263.4 155.3C264.2 152.0 265.0 148.8 266.0 145.5C266.9 142.3 267.8 139.1 268.9 135.9C270.0 132.7 271.0 129.5 272.5 126.5C274.0 123.6 275.6 120.4 278.0 118.1C280.3 115.9 283.5 114.0 286.6 113.2C289.7 112.4 293.3 112.5 296.5 113.2C299.7 113.9 303.5 116.0 305.7 117.3C307.9 118.6 308.5 119.6 309.9 120.8C311.2 122.0 312.6 123.2 313.9 124.5C315.2 125.8 316.3 127.2 317.5 128.6C318.7 130.0 319.8 131.4 321.0 132.8C322.2 134.2 323.5 135.4 324.6 136.8C325.8 138.2 326.8 139.7 327.8 141.3C328.7 142.8 329.5 144.4 330.4 146.1C331.2 147.7 332.0 149.3 332.8 150.9C333.6 152.6 334.5 154.2 335.3 155.8C336.1 157.4 336.9 159.1 337.7 160.7C338.5 162.3 339.3 164.0 340.1 165.6C340.9 167.2 341.7 168.8 342.6 170.4C343.5 172.0 344.4 173.6 345.3 175.2C346.2 176.7 347.2 178.2 348.2 179.8C349.2 181.3 352.2 181.9 351.1 184.4C350.0 186.9 344.2 190.9 341.5 194.7C338.8 198.4 337.5 203.2 334.9 207.1C332.4 211.1 329.5 214.9 326.4 218.3C323.2 221.7 319.7 225.1 315.8 227.6C311.9 230.2 307.5 232.1 303.1 233.6C298.7 235.2 294.0 236.1 289.4 237.1C284.8 238.1 280.2 239.3 275.5 239.7C270.9 240.0 266.0 240.2 261.5 239.3C257.0 238.4 250.3 236.8 248.3 234.3Z" fill="url(#gHead)"/>
<path d="M281.0 207.1C280.9 206.3 280.4 203.8 280.1 202.2C279.9 200.6 279.6 198.9 279.4 197.3C279.2 195.7 279.0 194.0 278.9 192.4C278.8 190.7 278.8 189.0 278.8 187.4C278.7 185.7 278.7 184.1 278.7 182.4C278.7 180.8 278.7 179.1 278.7 177.5C278.8 175.8 278.8 174.2 278.9 172.5C278.9 170.8 279.0 169.2 279.2 167.5C279.3 165.9 279.5 164.2 279.7 162.6C280.0 161.0 280.3 159.3 280.6 157.7C281.0 156.1 281.4 154.5 282.0 153.0C282.5 151.4 283.1 149.8 283.9 148.4C284.7 146.9 285.6 145.5 286.7 144.3C287.9 143.1 289.2 142.1 290.5 141.2C291.9 140.3 293.7 139.1 295.0 139.0C296.3 138.9 297.4 140.1 298.6 140.6C299.7 141.2 300.9 141.7 302.1 142.4C303.2 143.0 304.3 143.7 305.4 144.5C306.4 145.3 307.4 146.2 308.3 147.1C309.2 148.0 310.1 148.9 311.0 149.9C311.9 150.9 312.7 151.9 313.5 152.9C314.3 153.9 315.1 155.0 315.9 156.1C316.6 157.1 317.3 158.2 318.0 159.3C318.7 160.4 319.4 161.6 320.0 162.7C320.6 163.9 321.2 165.0 321.7 166.2C322.2 167.4 322.7 168.7 323.0 169.9C323.3 171.2 323.6 172.5 323.7 173.8C323.8 175.1 323.8 176.4 323.8 177.7C323.8 179.0 323.6 180.3 323.6 181.6C323.5 182.9 323.8 184.0 323.3 185.5C322.8 187.0 321.4 188.8 320.4 190.4C319.3 192.0 318.2 193.6 316.9 194.9C315.6 196.3 314.0 197.4 312.4 198.4C310.8 199.5 309.1 200.3 307.4 201.2C305.7 202.1 304.0 202.9 302.2 203.7C300.5 204.5 298.7 205.2 297.0 205.9C295.2 206.6 293.4 207.3 291.6 207.8C289.7 208.4 287.8 209.3 286.0 209.2C284.3 209.1 281.8 207.5 281.0 207.1M277.7 209.8C277.6 208.9 277.3 206.2 277.1 204.4C276.9 202.6 276.7 200.8 276.6 199.0C276.4 197.2 276.3 195.4 276.3 193.6C276.2 191.7 276.3 189.9 276.3 188.1C276.3 186.3 276.4 184.5 276.5 182.7C276.5 180.8 276.6 179.0 276.7 177.2C276.8 175.4 276.9 173.6 277.1 171.8C277.2 169.9 277.4 168.1 277.6 166.3C277.8 164.5 278.0 162.7 278.3 160.9C278.6 159.1 279.0 157.3 279.5 155.6C279.9 153.8 280.4 152.0 281.0 150.3C281.7 148.6 282.4 146.9 283.3 145.4C284.3 143.8 285.4 142.4 286.7 141.2C288.0 140.0 289.6 139.1 291.1 138.4C292.7 137.6 294.6 136.8 296.1 136.8C297.5 136.9 298.5 138.0 299.7 138.7C300.9 139.3 302.1 139.9 303.2 140.6C304.4 141.3 305.5 142.1 306.6 142.9C307.6 143.8 308.6 144.7 309.6 145.7C310.5 146.6 311.5 147.6 312.4 148.6C313.3 149.6 314.1 150.7 314.9 151.8C315.8 152.8 316.5 153.9 317.3 155.1C318.1 156.2 318.8 157.3 319.5 158.5C320.2 159.7 320.9 160.8 321.5 162.0C322.1 163.2 322.7 164.4 323.3 165.7C323.8 166.9 324.3 168.2 324.7 169.5C325.1 170.8 325.4 172.1 325.6 173.4C325.8 174.8 325.9 176.1 325.9 177.4C326.0 178.8 326.0 180.1 326.0 181.4C326.0 182.7 326.7 183.8 326.1 185.4C325.5 187.0 323.7 189.0 322.5 190.8C321.3 192.6 320.2 194.6 318.7 196.2C317.3 197.8 315.5 199.1 313.8 200.4C312.0 201.7 310.1 202.8 308.2 203.9C306.3 204.9 304.3 205.8 302.3 206.7C300.3 207.6 298.3 208.3 296.2 209.0C294.1 209.7 292.1 210.5 290.0 211.0C287.9 211.5 285.6 212.4 283.6 212.2C281.5 212.0 278.7 210.2 277.7 209.8M273.8 213.1C273.7 212.1 273.5 209.1 273.4 207.1C273.3 205.1 273.2 203.1 273.1 201.1C273.1 199.0 273.0 197.0 273.1 195.0C273.1 193.0 273.2 191.0 273.4 189.0C273.5 186.9 273.6 184.9 273.8 182.9C274.0 180.9 274.1 178.9 274.3 176.9C274.5 174.9 274.7 172.9 274.9 170.9C275.2 168.9 275.4 166.8 275.7 164.8C276.0 162.8 276.3 160.8 276.7 158.9C277.1 156.9 277.5 154.9 278.0 152.9C278.6 151.0 279.1 149.0 279.9 147.1C280.7 145.3 281.5 143.3 282.6 141.7C283.7 140.1 285.2 138.6 286.7 137.5C288.3 136.4 290.1 135.6 291.8 135.0C293.6 134.5 295.8 134.0 297.4 134.2C298.9 134.4 299.8 135.6 301.0 136.3C302.3 137.0 303.5 137.7 304.7 138.5C305.8 139.2 307.0 140.1 308.0 141.0C309.1 141.9 310.1 142.9 311.1 143.9C312.1 144.9 313.1 146.0 314.0 147.0C314.9 148.1 315.8 149.2 316.7 150.4C317.5 151.5 318.3 152.7 319.0 153.9C319.8 155.0 320.5 156.3 321.3 157.5C322.0 158.7 322.7 159.9 323.3 161.2C324.0 162.5 324.6 163.7 325.2 165.0C325.8 166.3 326.3 167.6 326.8 169.0C327.2 170.3 327.6 171.7 327.9 173.0C328.2 174.4 328.3 175.8 328.5 177.1C328.7 178.5 328.8 179.8 329.0 181.2C329.1 182.6 330.1 183.6 329.4 185.3C328.8 186.9 326.4 189.3 325.0 191.3C323.6 193.4 322.5 195.7 320.9 197.6C319.3 199.5 317.4 201.2 315.5 202.8C313.5 204.4 311.4 205.8 309.2 207.0C307.1 208.3 304.8 209.3 302.4 210.3C300.1 211.2 297.7 212.0 295.3 212.8C292.9 213.5 290.5 214.3 288.0 214.8C285.6 215.3 283.0 216.1 280.6 215.8C278.3 215.5 274.9 213.5 273.8 213.1M267.9 218.0C267.9 216.8 267.9 213.4 267.9 211.1C268.0 208.7 268.0 206.4 268.0 204.1C268.1 201.8 268.1 199.5 268.3 197.2C268.4 194.8 268.7 192.5 269.0 190.2C269.2 187.9 269.5 185.6 269.8 183.3C270.1 181.0 270.4 178.7 270.7 176.4C271.0 174.1 271.4 171.8 271.7 169.5C272.1 167.2 272.4 164.9 272.8 162.6C273.3 160.3 273.7 158.1 274.2 155.8C274.7 153.5 275.3 151.2 275.9 149.0C276.6 146.8 277.3 144.5 278.2 142.4C279.1 140.3 280.1 138.0 281.5 136.3C282.9 134.5 284.8 132.9 286.7 131.9C288.6 130.8 290.8 130.2 292.9 130.0C295.0 129.7 297.6 129.9 299.3 130.3C301.0 130.8 301.8 131.9 303.1 132.7C304.3 133.5 305.6 134.3 306.8 135.2C308.0 136.1 309.1 137.1 310.2 138.1C311.3 139.2 312.3 140.3 313.4 141.4C314.4 142.5 315.5 143.5 316.5 144.7C317.4 145.8 318.4 147.0 319.2 148.3C320.1 149.5 320.9 150.8 321.7 152.1C322.4 153.3 323.2 154.7 323.9 156.0C324.7 157.3 325.4 158.6 326.1 160.0C326.8 161.3 327.4 162.7 328.1 164.0C328.7 165.4 329.3 166.8 329.8 168.2C330.4 169.6 330.8 171.0 331.3 172.4C331.7 173.8 332.0 175.3 332.4 176.7C332.8 178.1 333.1 179.5 333.4 180.9C333.7 182.3 335.2 183.2 334.4 185.1C333.7 186.9 330.5 189.6 328.8 192.1C327.1 194.6 325.9 197.4 324.1 199.8C322.3 202.2 320.2 204.4 318.0 206.4C315.7 208.4 313.3 210.2 310.8 211.8C308.2 213.3 305.4 214.6 302.6 215.7C299.8 216.8 296.8 217.6 293.9 218.4C291.0 219.2 288.1 220.1 285.2 220.5C282.2 221.0 279.1 221.7 276.2 221.2C273.3 220.8 269.3 218.5 267.9 218.0M261.4 223.4C261.5 222.1 261.7 218.1 261.8 215.5C262.0 212.8 262.1 210.2 262.3 207.5C262.5 204.9 262.7 202.2 263.0 199.6C263.3 196.9 263.7 194.3 264.0 191.7C264.4 189.0 264.9 186.4 265.3 183.8C265.8 181.1 266.3 178.5 266.7 175.9C267.2 173.3 267.7 170.7 268.1 168.0C268.6 165.4 269.1 162.8 269.7 160.2C270.2 157.6 270.8 155.0 271.5 152.4C272.1 149.8 272.8 147.2 273.6 144.6C274.4 142.1 275.2 139.5 276.3 137.1C277.4 134.7 278.6 132.1 280.3 130.2C282.1 128.3 284.4 126.6 286.7 125.6C289.0 124.7 291.7 124.3 294.1 124.4C296.6 124.5 299.5 125.3 301.4 126.0C303.3 126.7 304.0 127.8 305.3 128.8C306.6 129.7 307.9 130.6 309.2 131.7C310.4 132.7 311.5 133.8 312.6 135.0C313.8 136.1 314.8 137.3 315.9 138.5C317.0 139.7 318.2 140.8 319.2 142.1C320.2 143.3 321.2 144.6 322.1 145.9C323.0 147.3 323.8 148.7 324.6 150.1C325.4 151.5 326.1 152.9 326.9 154.3C327.6 155.7 328.4 157.1 329.1 158.6C329.9 160.0 330.6 161.5 331.3 162.9C332.0 164.4 332.6 165.8 333.3 167.3C333.9 168.8 334.5 170.3 335.0 171.8C335.6 173.2 336.2 174.7 336.7 176.2C337.3 177.6 337.8 179.1 338.3 180.5C338.9 182.0 340.9 182.8 340.0 184.8C339.1 186.9 335.1 190.1 333.0 193.0C331.0 195.9 329.8 199.4 327.7 202.3C325.7 205.2 323.3 207.9 320.8 210.4C318.2 212.8 315.4 215.2 312.4 217.1C309.4 219.0 306.1 220.4 302.7 221.7C299.4 222.9 295.9 223.7 292.4 224.6C289.0 225.5 285.5 226.5 281.9 226.9C278.4 227.3 274.7 227.8 271.3 227.2C267.9 226.7 263.0 224.1 261.4 223.4M254.8 228.9C255.0 227.4 255.4 222.9 255.7 219.9C256.0 216.9 256.3 213.9 256.7 210.9C257.0 207.9 257.2 204.9 257.6 202.0C258.1 199.0 258.6 196.0 259.1 193.1C259.7 190.1 260.3 187.2 260.9 184.2C261.5 181.3 262.1 178.3 262.7 175.4C263.3 172.4 263.9 169.5 264.6 166.5C265.2 163.6 265.8 160.7 266.5 157.7C267.2 154.8 267.9 151.9 268.7 149.0C269.5 146.1 270.3 143.1 271.2 140.3C272.2 137.4 273.1 134.5 274.4 131.8C275.7 129.1 277.1 126.3 279.2 124.2C281.2 122.1 283.9 120.3 286.6 119.4C289.3 118.5 292.5 118.4 295.3 118.8C298.1 119.2 301.5 120.6 303.6 121.6C305.6 122.6 306.3 123.7 307.6 124.8C308.9 125.9 310.3 126.9 311.5 128.1C312.8 129.2 313.9 130.5 315.1 131.8C316.2 133.0 317.3 134.4 318.4 135.6C319.6 136.9 320.8 138.1 321.9 139.4C323.0 140.8 324.0 142.2 324.9 143.6C325.9 145.0 326.6 146.6 327.5 148.1C328.3 149.6 329.1 151.1 329.8 152.6C330.6 154.1 331.4 155.7 332.2 157.2C333.0 158.7 333.7 160.3 334.5 161.8C335.2 163.4 335.9 164.9 336.7 166.5C337.4 168.0 338.1 169.6 338.8 171.1C339.5 172.6 340.3 174.2 341.0 175.7C341.8 177.2 342.5 178.7 343.3 180.2C344.0 181.6 346.5 182.3 345.5 184.6C344.5 186.9 339.6 190.5 337.3 193.8C334.9 197.2 333.6 201.3 331.3 204.7C329.0 208.1 326.4 211.4 323.6 214.3C320.7 217.3 317.6 220.1 314.1 222.4C310.7 224.6 306.8 226.2 302.9 227.6C299.0 229.1 294.9 229.9 290.9 230.8C286.9 231.8 282.8 232.9 278.7 233.3C274.6 233.7 270.4 234.0 266.4 233.3C262.4 232.5 256.8 229.6 254.8 228.9M351.1 184.4C349.5 186.1 344.2 190.9 341.5 194.7C338.8 198.4 337.5 203.2 334.9 207.1C332.4 211.1 329.5 214.9 326.4 218.3C323.2 221.7 319.7 225.1 315.8 227.6C311.9 230.2 307.5 232.1 303.1 233.6C298.7 235.2 294.0 236.1 289.4 237.1C284.8 238.1 280.2 239.3 275.5 239.7C270.9 240.0 266.0 240.2 261.5 239.3C257.0 238.4 250.5 235.1 248.3 234.3" fill="none" stroke="#3a2418" stroke-width="0.7" stroke-opacity="0.8"/>
<path d="M281.0 207.1L248.3 234.3M279.3 196.6L251.1 212.9M278.7 186.0L254.8 191.7M278.8 175.3L259.7 170.7M279.4 164.7L264.8 149.7M281.6 154.3L271.4 129.2M286.3 144.9L285.2 113.6M295.0 139.0L305.7 117.3M301.6 142.2L313.4 124.0M307.6 146.4L320.1 131.8M312.6 151.8L326.7 139.5M316.9 157.7L331.6 148.5M320.6 164.0L336.2 157.6M323.3 170.9L340.7 166.8M323.8 178.2L345.7 175.7M323.3 185.5L351.1 184.4M317.7 194.1L336.3 204.7M309.4 200.2L320.3 224.2M300.1 204.6L297.7 235.2M290.5 208.1L272.7 239.9" fill="none" stroke="#3a2418" stroke-width="0.7" stroke-opacity="0.8"/>
<ellipse cx="296" cy="136" rx="24" ry="21" fill="url(#gCav)"/>
<path d="M281.0 207.1C279.8 204.2 279.2 198.4 278.9 191.7C278.6 185.0 278.6 173.6 279.2 166.9C279.8 160.2 281.0 155.5 282.5 151.5C284.0 147.5 285.9 145.1 288.0 143.0C290.1 140.9 292.0 138.7 295.0 139.0C298.0 139.3 302.4 142.0 306.0 145.0C309.6 148.0 313.6 152.7 316.5 157.0C319.4 161.3 322.2 166.2 323.3 171.0C324.4 175.8 324.5 181.4 323.3 185.5C322.1 189.6 319.6 192.7 316.0 195.8C312.4 198.9 306.6 201.8 301.6 204.0C296.6 206.2 289.5 208.7 286.1 209.2C282.7 209.7 282.2 210.0 281.0 207.1Z" fill="none" stroke="#6a3a28" stroke-width="6" stroke-opacity="0.28"/>
<path d="M281.0 207.1C279.8 204.2 279.2 198.4 278.9 191.7C278.6 185.0 278.6 173.6 279.2 166.9C279.8 160.2 281.0 155.5 282.5 151.5C284.0 147.5 285.9 145.1 288.0 143.0C290.1 140.9 292.0 138.7 295.0 139.0C298.0 139.3 302.4 142.0 306.0 145.0C309.6 148.0 313.6 152.7 316.5 157.0C319.4 161.3 322.2 166.2 323.3 171.0C324.4 175.8 324.5 181.4 323.3 185.5C322.1 189.6 319.6 192.7 316.0 195.8C312.4 198.9 306.6 201.8 301.6 204.0C296.6 206.2 289.5 208.7 286.1 209.2C282.7 209.7 282.2 210.0 281.0 207.1Z" fill="url(#gEar)"/>
<g clip-path="url(#cInnerL)"><path d="M286.0 146.0C285.2 151.2 282.0 167.0 281.5 177.0C281.0 187.0 282.8 201.2 283.0 206.0M291.0 141.0C290.5 146.7 288.2 163.8 288.0 175.0C287.8 186.2 289.7 202.5 290.0 208.0M297.0 143.0C296.8 148.3 296.2 164.5 296.0 175.0C295.8 185.5 296.0 200.8 296.0 206.0M304.0 147.0C304.2 151.8 305.0 166.8 305.0 176.0C305.0 185.2 304.2 197.7 304.0 202.0M311.0 153.0C311.3 157.0 313.0 169.7 313.0 177.0C313.0 184.3 311.3 193.7 311.0 197.0M318.0 161.0C318.3 164.2 320.0 174.8 320.0 180.0C320.0 185.2 318.3 190.0 318.0 192.0M279.0 157.0C281.2 155.7 287.5 150.5 292.0 149.0C296.5 147.5 303.7 148.2 306.0 148.0M279.0 170.0C282.0 168.8 290.5 165.2 297.0 163.0C303.5 160.8 314.5 158.0 318.0 157.0M279.0 183.0C282.3 181.8 291.8 178.3 299.0 176.0C306.2 173.7 318.2 170.2 322.0 169.0M280.0 195.0C283.3 193.8 292.8 190.3 300.0 188.0C307.2 185.7 319.2 182.2 323.0 181.0M282.0 205.0C285.3 204.0 295.7 201.2 302.0 199.0C308.3 196.8 317.0 193.2 320.0 192.0" fill="none" stroke="#2a2a2a" stroke-width="0.7" stroke-opacity="0.8"/></g>
<path d="M281.0 207.1C279.8 204.2 279.2 198.4 278.9 191.7C278.6 185.0 278.6 173.6 279.2 166.9C279.8 160.2 281.0 155.5 282.5 151.5C284.0 147.5 285.9 145.1 288.0 143.0C290.1 140.9 292.0 138.7 295.0 139.0C298.0 139.3 302.4 142.0 306.0 145.0C309.6 148.0 313.6 152.7 316.5 157.0C319.4 161.3 322.2 166.2 323.3 171.0C324.4 175.8 324.5 181.4 323.3 185.5C322.1 189.6 319.6 192.7 316.0 195.8C312.4 198.9 306.6 201.8 301.6 204.0C296.6 206.2 289.5 208.7 286.1 209.2C282.7 209.7 282.2 210.0 281.0 207.1Z" fill="none" stroke="#5a3a30" stroke-width="0.9"/>
</g></g>
<path d="M365.5 191.6C363.5 191.6 361.8 192.0 359.4 190.8C357.0 189.6 353.9 187.7 351.1 184.4C348.4 181.1 345.6 176.0 342.9 171.0C340.1 166.0 337.2 159.7 334.6 154.5C332.0 149.3 329.4 143.8 327.0 140.0C324.6 136.2 322.2 134.3 320.0 131.7C317.8 129.1 316.3 126.9 313.9 124.5C311.5 122.1 308.6 119.2 305.7 117.3C302.8 115.4 299.1 114.0 296.4 113.2C293.6 112.4 291.8 112.2 289.2 112.6C286.6 113.0 283.3 114.1 280.9 115.7C278.5 117.3 276.6 119.4 274.7 122.4C272.8 125.4 271.3 129.0 269.6 133.8C267.9 138.6 266.2 144.5 264.4 151.3C262.6 158.1 260.7 166.4 258.8 174.5C256.9 182.6 254.5 192.9 253.1 200.0C251.7 207.1 251.4 211.4 250.6 217.1C249.8 222.8 249.0 228.6 248.3 234.3C247.6 240.0 247.2 245.7 246.6 251.4C246.0 257.1 245.2 262.9 244.6 268.6C244.0 274.3 243.5 280.6 243.2 285.7C242.9 290.8 242.8 295.6 242.9 299.0C243.0 302.4 242.9 303.0 243.5 306.0C244.1 309.0 244.8 313.3 246.2 317.0C247.6 320.7 249.4 324.6 251.7 328.0C254.0 331.4 256.8 334.4 260.0 337.6C263.2 340.8 267.1 344.2 271.0 347.2C274.9 350.2 279.0 353.1 283.4 355.5C287.8 357.9 292.8 360.1 297.1 361.7C301.5 363.3 306.0 364.3 309.5 365.1C313.0 365.9 313.1 365.9 318.0 366.5C322.9 367.1 331.1 368.1 339.0 368.6C346.9 369.2 356.7 369.8 365.5 369.8C374.3 369.8 384.1 369.2 392.0 368.6C399.9 368.1 408.1 367.1 413.0 366.5C417.9 365.9 418.0 365.9 421.5 365.1C425.0 364.3 429.5 363.3 433.9 361.7C438.2 360.1 443.2 357.9 447.6 355.5C452.0 353.1 456.1 350.2 460.0 347.2C463.9 344.2 467.8 340.8 471.0 337.6C474.2 334.4 477.0 331.4 479.3 328.0C481.6 324.6 483.4 320.7 484.8 317.0C486.2 313.3 486.9 309.0 487.5 306.0C488.1 303.0 488.1 302.4 488.1 299.0C488.2 295.6 488.1 290.8 487.8 285.7C487.5 280.6 487.0 274.3 486.4 268.6C485.8 262.9 485.0 257.1 484.4 251.4C483.8 245.7 483.4 240.0 482.7 234.3C482.0 228.6 481.2 222.8 480.4 217.1C479.6 211.4 479.3 207.1 477.9 200.0C476.5 192.9 474.1 182.6 472.2 174.5C470.3 166.4 468.4 158.1 466.6 151.3C464.8 144.5 463.1 138.6 461.4 133.8C459.7 129.0 458.2 125.4 456.3 122.4C454.4 119.4 452.5 117.3 450.1 115.7C447.7 114.1 444.4 113.0 441.8 112.6C439.2 112.2 437.4 112.4 434.6 113.2C431.9 114.0 428.2 115.4 425.3 117.3C422.4 119.2 419.5 122.1 417.1 124.5C414.7 126.9 413.2 129.1 411.0 131.7C408.8 134.3 406.4 136.2 404.0 140.0C401.6 143.8 399.0 149.3 396.4 154.5C393.8 159.7 390.9 166.0 388.1 171.0C385.4 176.0 382.6 181.1 379.9 184.4C377.1 187.7 374.0 189.6 371.6 190.8C369.2 192.0 367.5 191.6 365.5 191.6Z" fill="url(#gHeadR)"/>
</g>
<path d="M365.5 191.6C363.5 191.6 361.8 192.0 359.4 190.8C357.0 189.6 353.9 187.7 351.1 184.4C348.4 181.1 345.6 176.0 342.9 171.0C340.1 166.0 337.2 159.7 334.6 154.5C332.0 149.3 329.4 143.8 327.0 140.0C324.6 136.2 322.2 134.3 320.0 131.7C317.8 129.1 316.3 126.9 313.9 124.5C311.5 122.1 308.6 119.2 305.7 117.3C302.8 115.4 299.1 114.0 296.4 113.2C293.6 112.4 291.8 112.2 289.2 112.6C286.6 113.0 283.3 114.1 280.9 115.7C278.5 117.3 276.6 119.4 274.7 122.4C272.8 125.4 271.3 129.0 269.6 133.8C267.9 138.6 266.2 144.5 264.4 151.3C262.6 158.1 260.7 166.4 258.8 174.5C256.9 182.6 254.5 192.9 253.1 200.0C251.7 207.1 251.4 211.4 250.6 217.1C249.8 222.8 249.0 228.6 248.3 234.3C247.6 240.0 247.2 245.7 246.6 251.4C246.0 257.1 245.2 262.9 244.6 268.6C244.0 274.3 243.5 280.6 243.2 285.7C242.9 290.8 242.8 295.6 242.9 299.0C243.0 302.4 242.9 303.0 243.5 306.0C244.1 309.0 244.8 313.3 246.2 317.0C247.6 320.7 249.4 324.6 251.7 328.0C254.0 331.4 256.8 334.4 260.0 337.6C263.2 340.8 267.1 344.2 271.0 347.2C274.9 350.2 279.0 353.1 283.4 355.5C287.8 357.9 292.8 360.1 297.1 361.7C301.5 363.3 306.0 364.3 309.5 365.1C313.0 365.9 313.1 365.9 318.0 366.5C322.9 367.1 331.1 368.1 339.0 368.6C346.9 369.2 356.7 369.8 365.5 369.8C374.3 369.8 384.1 369.2 392.0 368.6C399.9 368.1 408.1 367.1 413.0 366.5C417.9 365.9 418.0 365.9 421.5 365.1C425.0 364.3 429.5 363.3 433.9 361.7C438.2 360.1 443.2 357.9 447.6 355.5C452.0 353.1 456.1 350.2 460.0 347.2C463.9 344.2 467.8 340.8 471.0 337.6C474.2 334.4 477.0 331.4 479.3 328.0C481.6 324.6 483.4 320.7 484.8 317.0C486.2 313.3 486.9 309.0 487.5 306.0C488.1 303.0 488.1 302.4 488.1 299.0C488.2 295.6 488.1 290.8 487.8 285.7C487.5 280.6 487.0 274.3 486.4 268.6C485.8 262.9 485.0 257.1 484.4 251.4C483.8 245.7 483.4 240.0 482.7 234.3C482.0 228.6 481.2 222.8 480.4 217.1C479.6 211.4 479.3 207.1 477.9 200.0C476.5 192.9 474.1 182.6 472.2 174.5C470.3 166.4 468.4 158.1 466.6 151.3C464.8 144.5 463.1 138.6 461.4 133.8C459.7 129.0 458.2 125.4 456.3 122.4C454.4 119.4 452.5 117.3 450.1 115.7C447.7 114.1 444.4 113.0 441.8 112.6C439.2 112.2 437.4 112.4 434.6 113.2C431.9 114.0 428.2 115.4 425.3 117.3C422.4 119.2 419.5 122.1 417.1 124.5C414.7 126.9 413.2 129.1 411.0 131.7C408.8 134.3 406.4 136.2 404.0 140.0C401.6 143.8 399.0 149.3 396.4 154.5C393.8 159.7 390.9 166.0 388.1 171.0C385.4 176.0 382.6 181.1 379.9 184.4C377.1 187.7 374.0 189.6 371.6 190.8C369.2 192.0 367.5 191.6 365.5 191.6Z" fill="none" stroke="#4a2a1a" stroke-width="0.8" stroke-opacity="0.6"/>
<ellipse cx="302" cy="283" rx="7" ry="15.5" fill="url(#gEye)"/><ellipse cx="429" cy="283" rx="7" ry="15.5" fill="url(#gEye)"/>
<path d="M296 275H308M295 281H309M295 287H309M296 293H308M299 268.5V297.5M302 267.5V298.5M305 268.5V297.5M423 275H435M422 281H436M422 287H436M423 293H435M426 268.5V297.5M429 267.5V298.5M432 268.5V297.5" stroke="#4a4a4a" stroke-width="0.5" stroke-opacity="0.6"/>
<defs><clipPath id="cNose"><path d="M398.4 301.6C398.4 304.0 398.2 305.5 397.9 307.3C397.6 309.1 397.1 310.8 396.5 312.4C395.9 314.1 395.1 315.6 394.2 317.1C393.3 318.6 392.2 320.0 391.1 321.3C389.9 322.6 388.6 323.8 387.2 324.9C385.8 326.0 384.2 326.9 382.6 327.8C381.0 328.6 379.3 329.3 377.5 329.9C375.7 330.4 373.8 330.9 371.9 331.2C369.9 331.5 367.8 331.6 365.7 331.6C363.6 331.6 361.5 331.5 359.5 331.2C357.6 330.9 355.7 330.4 353.9 329.9C352.1 329.3 350.4 328.6 348.8 327.8C347.2 326.9 345.6 326.0 344.2 324.9C342.8 323.8 341.5 322.6 340.3 321.3C339.2 320.0 338.1 318.6 337.2 317.1C336.3 315.6 335.5 314.1 334.9 312.4C334.3 310.8 333.8 309.1 333.5 307.3C333.2 305.5 333.0 304.0 333.0 301.6C333.0 299.3 333.1 295.6 333.4 293.3C333.6 291.0 334.0 289.5 334.4 287.9C334.9 286.3 335.5 284.9 336.2 283.6C337.0 282.2 337.8 281.0 338.8 279.9C339.7 278.8 340.8 277.9 342.0 277.0C343.2 276.1 344.5 275.3 345.9 274.7C347.4 274.0 348.9 273.5 350.7 273.0C352.5 272.6 354.0 272.3 356.5 272.0C359.0 271.8 362.6 271.7 365.7 271.7C368.8 271.7 372.4 271.8 374.9 272.0C377.4 272.3 378.9 272.6 380.7 273.0C382.5 273.5 384.0 274.0 385.5 274.7C386.9 275.3 388.2 276.1 389.4 277.0C390.6 277.9 391.7 278.8 392.6 279.9C393.6 281.0 394.4 282.2 395.2 283.6C395.9 284.9 396.5 286.3 397.0 287.9C397.4 289.5 397.8 291.0 398.0 293.3C398.3 295.6 398.4 299.3 398.4 301.6Z"/></clipPath>
<radialGradient id="gNose" gradientUnits="userSpaceOnUse" cx="370" cy="290" r="42"><stop offset="0" stop-color="#e2e2e4"/><stop offset="0.55" stop-color="#cfcfd2"/><stop offset="0.85" stop-color="#aaaaae"/><stop offset="1" stop-color="#7a7a7e"/></radialGradient>
<radialGradient id="gEye" cx="0.5" cy="0.5" r="0.5"><stop offset="0" stop-color="#1e1e1e"/><stop offset="0.75" stop-color="#1c1c1c"/><stop offset="1" stop-color="#3a3a3a"/></radialGradient></defs>
<path d="M398.4 301.6C398.4 304.0 398.2 305.5 397.9 307.3C397.6 309.1 397.1 310.8 396.5 312.4C395.9 314.1 395.1 315.6 394.2 317.1C393.3 318.6 392.2 320.0 391.1 321.3C389.9 322.6 388.6 323.8 387.2 324.9C385.8 326.0 384.2 326.9 382.6 327.8C381.0 328.6 379.3 329.3 377.5 329.9C375.7 330.4 373.8 330.9 371.9 331.2C369.9 331.5 367.8 331.6 365.7 331.6C363.6 331.6 361.5 331.5 359.5 331.2C357.6 330.9 355.7 330.4 353.9 329.9C352.1 329.3 350.4 328.6 348.8 327.8C347.2 326.9 345.6 326.0 344.2 324.9C342.8 323.8 341.5 322.6 340.3 321.3C339.2 320.0 338.1 318.6 337.2 317.1C336.3 315.6 335.5 314.1 334.9 312.4C334.3 310.8 333.8 309.1 333.5 307.3C333.2 305.5 333.0 304.0 333.0 301.6C333.0 299.3 333.1 295.6 333.4 293.3C333.6 291.0 334.0 289.5 334.4 287.9C334.9 286.3 335.5 284.9 336.2 283.6C337.0 282.2 337.8 281.0 338.8 279.9C339.7 278.8 340.8 277.9 342.0 277.0C343.2 276.1 344.5 275.3 345.9 274.7C347.4 274.0 348.9 273.5 350.7 273.0C352.5 272.6 354.0 272.3 356.5 272.0C359.0 271.8 362.6 271.7 365.7 271.7C368.8 271.7 372.4 271.8 374.9 272.0C377.4 272.3 378.9 272.6 380.7 273.0C382.5 273.5 384.0 274.0 385.5 274.7C386.9 275.3 388.2 276.1 389.4 277.0C390.6 277.9 391.7 278.8 392.6 279.9C393.6 281.0 394.4 282.2 395.2 283.6C395.9 284.9 396.5 286.3 397.0 287.9C397.4 289.5 397.8 291.0 398.0 293.3C398.3 295.6 398.4 299.3 398.4 301.6Z" fill="url(#gNose)"/>
<g clip-path="url(#cNose)"><path d="M335.2 270.4C335.1 272.1 334.5 277.4 334.2 280.9C334.0 284.4 333.8 287.8 333.6 291.3C333.5 294.8 333.3 298.3 333.4 301.8C333.5 305.3 333.7 308.8 334.1 312.3C334.6 315.8 335.3 319.2 336.3 322.7C337.2 326.2 339.3 331.5 339.9 333.2M336.0 270.4C335.8 272.1 335.2 277.4 335.0 280.9C334.7 284.4 334.5 287.8 334.4 291.3C334.3 294.8 334.1 298.3 334.2 301.8C334.3 305.3 334.4 308.8 334.9 312.3C335.4 315.8 336.1 319.2 337.0 322.7C337.9 326.2 339.9 331.5 340.5 333.2M337.4 270.4C337.2 272.1 336.7 277.4 336.4 280.9C336.2 284.4 336.0 287.8 335.9 291.3C335.8 294.8 335.6 298.3 335.7 301.8C335.8 305.3 335.9 308.8 336.4 312.3C336.8 315.8 337.5 319.2 338.4 322.7C339.2 326.2 341.1 331.5 341.7 333.2M339.4 270.4C339.2 272.1 338.7 277.4 338.5 280.9C338.3 284.4 338.1 287.8 338.0 291.3C337.9 294.8 337.8 298.3 337.8 301.8C337.9 305.3 338.0 308.8 338.4 312.3C338.9 315.8 339.5 319.2 340.3 322.7C341.1 326.2 342.9 331.5 343.4 333.2M342.0 270.4C341.9 272.1 341.4 277.4 341.2 280.9C341.0 284.4 340.8 287.8 340.7 291.3C340.6 294.8 340.5 298.3 340.6 301.8C340.7 305.3 340.8 308.8 341.1 312.3C341.5 315.8 342.1 319.2 342.8 322.7C343.6 326.2 345.1 331.5 345.6 333.2M345.1 270.4C345.0 272.1 344.6 277.4 344.4 280.9C344.3 284.4 344.1 287.8 344.0 291.3C343.9 294.8 343.8 298.3 343.9 301.8C344.0 305.3 344.1 308.8 344.4 312.3C344.7 315.8 345.2 319.2 345.8 322.7C346.5 326.2 347.9 331.5 348.3 333.2M348.7 270.4C348.6 272.1 348.3 277.4 348.1 280.9C348.0 284.4 347.9 287.8 347.8 291.3C347.7 294.8 347.6 298.3 347.7 301.8C347.7 305.3 347.8 308.8 348.1 312.3C348.4 315.8 348.8 319.2 349.3 322.7C349.8 326.2 351.0 331.5 351.3 333.2M352.7 270.4C352.6 272.1 352.3 277.4 352.2 280.9C352.1 284.4 352.0 287.8 352.0 291.3C351.9 294.8 351.8 298.3 351.9 301.8C351.9 305.3 352.0 308.8 352.2 312.3C352.4 315.8 352.7 319.2 353.1 322.7C353.5 326.2 354.4 331.5 354.7 333.2M356.9 270.4C356.9 272.1 356.7 277.4 356.6 280.9C356.5 284.4 356.5 287.8 356.4 291.3C356.4 294.8 356.4 298.3 356.4 301.8C356.4 305.3 356.4 308.8 356.6 312.3C356.7 315.8 356.9 319.2 357.2 322.7C357.5 326.2 358.1 331.5 358.3 333.2M361.4 270.4C361.3 272.1 361.2 277.4 361.2 280.9C361.2 284.4 361.1 287.8 361.1 291.3C361.1 294.8 361.1 298.3 361.1 301.8C361.1 305.3 361.1 308.8 361.2 312.3C361.3 315.8 361.4 319.2 361.5 322.7C361.7 326.2 362.0 331.5 362.0 333.2M365.9 270.4C365.9 272.1 365.9 277.4 365.9 280.9C365.9 284.4 365.9 287.8 365.9 291.3C365.9 294.8 365.9 298.3 365.9 301.8C365.9 305.3 365.9 308.8 365.9 312.3C365.9 315.8 365.9 319.2 365.9 322.7C365.9 326.2 365.9 331.5 365.9 333.2M370.4 270.4C370.5 272.1 370.6 277.4 370.6 280.9C370.6 284.4 370.7 287.8 370.7 291.3C370.7 294.8 370.7 298.3 370.7 301.8C370.7 305.3 370.7 308.8 370.6 312.3C370.5 315.8 370.4 319.2 370.3 322.7C370.1 326.2 369.8 331.5 369.8 333.2M374.9 270.4C374.9 272.1 375.1 277.4 375.2 280.9C375.3 284.4 375.3 287.8 375.4 291.3C375.4 294.8 375.4 298.3 375.4 301.8C375.4 305.3 375.4 308.8 375.2 312.3C375.1 315.8 374.9 319.2 374.6 322.7C374.3 326.2 373.7 331.5 373.5 333.2M379.1 270.4C379.2 272.1 379.5 277.4 379.6 280.9C379.7 284.4 379.8 287.8 379.8 291.3C379.9 294.8 380.0 298.3 379.9 301.8C379.9 305.3 379.8 308.8 379.6 312.3C379.4 315.8 379.1 319.2 378.7 322.7C378.3 326.2 377.4 331.5 377.1 333.2M383.1 270.4C383.2 272.1 383.5 277.4 383.7 280.9C383.8 284.4 383.9 287.8 384.0 291.3C384.1 294.8 384.2 298.3 384.1 301.8C384.1 305.3 384.0 308.8 383.7 312.3C383.4 315.8 383.0 319.2 382.5 322.7C382.0 326.2 380.8 331.5 380.5 333.2M386.7 270.4C386.8 272.1 387.2 277.4 387.4 280.9C387.5 284.4 387.7 287.8 387.8 291.3C387.9 294.8 388.0 298.3 387.9 301.8C387.8 305.3 387.7 308.8 387.4 312.3C387.1 315.8 386.6 319.2 386.0 322.7C385.3 326.2 383.9 331.5 383.5 333.2M389.8 270.4C389.9 272.1 390.4 277.4 390.6 280.9C390.8 284.4 391.0 287.8 391.1 291.3C391.2 294.8 391.3 298.3 391.2 301.8C391.1 305.3 391.0 308.8 390.7 312.3C390.3 315.8 389.7 319.2 389.0 322.7C388.2 326.2 386.7 331.5 386.2 333.2M392.4 270.4C392.6 272.1 393.1 277.4 393.3 280.9C393.5 284.4 393.7 287.8 393.8 291.3C393.9 294.8 394.0 298.3 394.0 301.8C393.9 305.3 393.8 308.8 393.4 312.3C392.9 315.8 392.3 319.2 391.5 322.7C390.7 326.2 388.9 331.5 388.4 333.2M394.4 270.4C394.6 272.1 395.1 277.4 395.4 280.9C395.6 284.4 395.8 287.8 395.9 291.3C396.0 294.8 396.2 298.3 396.1 301.8C396.0 305.3 395.9 308.8 395.4 312.3C395.0 315.8 394.3 319.2 393.4 322.7C392.6 326.2 390.7 331.5 390.1 333.2M395.8 270.4C396.0 272.1 396.6 277.4 396.8 280.9C397.1 284.4 397.3 287.8 397.4 291.3C397.5 294.8 397.7 298.3 397.6 301.8C397.5 305.3 397.4 308.8 396.9 312.3C396.4 315.8 395.7 319.2 394.8 322.7C393.9 326.2 391.9 331.5 391.3 333.2M396.6 270.4C396.7 272.1 397.3 277.4 397.6 280.9C397.8 284.4 398.0 287.8 398.2 291.3C398.3 294.8 398.5 298.3 398.4 301.8C398.3 305.3 398.1 308.8 397.7 312.3C397.2 315.8 396.5 319.2 395.5 322.7C394.6 326.2 392.5 331.5 391.9 333.2M331.3 271.0C337.1 271.3 354.4 272.6 365.9 272.6C377.4 272.6 394.7 271.3 400.5 271.0M331.3 271.9C337.1 272.2 354.4 273.5 365.9 273.5C377.4 273.5 394.7 272.2 400.5 271.9M331.3 273.6C337.1 273.8 354.4 275.2 365.9 275.2C377.4 275.2 394.7 273.8 400.5 273.6M331.3 275.9C337.1 276.2 354.4 277.5 365.9 277.5C377.4 277.5 394.7 276.2 400.5 275.9M331.3 279.0C337.1 279.2 354.4 280.6 365.9 280.6C377.4 280.6 394.7 279.2 400.5 279.0M331.3 282.6C337.1 282.9 354.4 284.2 365.9 284.2C377.4 284.2 394.7 282.9 400.5 282.6M331.3 286.7C337.1 287.0 354.4 288.3 365.9 288.3C377.4 288.3 394.7 287.0 400.5 286.7M331.3 291.2C337.1 291.5 354.4 292.8 365.9 292.8C377.4 292.8 394.7 291.5 400.5 291.2M331.3 295.9C337.1 296.2 354.4 297.5 365.9 297.5C377.4 297.5 394.7 296.2 400.5 295.9M331.3 300.8C337.1 301.1 354.4 302.4 365.9 302.4C377.4 302.4 394.7 301.1 400.5 300.8M331.3 305.7C337.1 305.9 354.4 307.3 365.9 307.3C377.4 307.3 394.7 305.9 400.5 305.7M331.3 310.4C337.1 310.7 354.4 312.0 365.9 312.0C377.4 312.0 394.7 310.7 400.5 310.4M331.3 314.9C337.1 315.2 354.4 316.5 365.9 316.5C377.4 316.5 394.7 315.2 400.5 314.9M331.3 319.0C337.1 319.3 354.4 320.6 365.9 320.6C377.4 320.6 394.7 319.3 400.5 319.0M331.3 322.6C337.1 322.9 354.4 324.2 365.9 324.2C377.4 324.2 394.7 322.9 400.5 322.6M331.3 325.7C337.1 325.9 354.4 327.3 365.9 327.3C377.4 327.3 394.7 325.9 400.5 325.7M331.3 328.0C337.1 328.3 354.4 329.6 365.9 329.6C377.4 329.6 394.7 328.3 400.5 328.0M331.3 329.7C337.1 329.9 354.4 331.3 365.9 331.3C377.4 331.3 394.7 329.9 400.5 329.7M331.3 330.6C337.1 330.8 354.4 332.2 365.9 332.2C377.4 332.2 394.7 330.8 400.5 330.6" fill="none" stroke="#2a2a2a" stroke-width="0.65" stroke-opacity="0.8"/>
<ellipse cx="365.6" cy="292.2" rx="10.3" ry="8.4" fill="url(#gEye)"/>
<ellipse cx="365.6" cy="292.2" rx="10.3" ry="8.4" fill="none" stroke="#555" stroke-width="1" stroke-opacity="0.6"/>
<path d="M355 288H376M355 292H376M355 296H376M359 283V301M362.5 283V301M366 283V301M369.5 283V301M373 283V301" stroke="#555" stroke-width="0.5" stroke-opacity="0.5"/>
</g>
<path d="M398.4 301.6C398.4 304.0 398.2 305.5 397.9 307.3C397.6 309.1 397.1 310.8 396.5 312.4C395.9 314.1 395.1 315.6 394.2 317.1C393.3 318.6 392.2 320.0 391.1 321.3C389.9 322.6 388.6 323.8 387.2 324.9C385.8 326.0 384.2 326.9 382.6 327.8C381.0 328.6 379.3 329.3 377.5 329.9C375.7 330.4 373.8 330.9 371.9 331.2C369.9 331.5 367.8 331.6 365.7 331.6C363.6 331.6 361.5 331.5 359.5 331.2C357.6 330.9 355.7 330.4 353.9 329.9C352.1 329.3 350.4 328.6 348.8 327.8C347.2 326.9 345.6 326.0 344.2 324.9C342.8 323.8 341.5 322.6 340.3 321.3C339.2 320.0 338.1 318.6 337.2 317.1C336.3 315.6 335.5 314.1 334.9 312.4C334.3 310.8 333.8 309.1 333.5 307.3C333.2 305.5 333.0 304.0 333.0 301.6C333.0 299.3 333.1 295.6 333.4 293.3C333.6 291.0 334.0 289.5 334.4 287.9C334.9 286.3 335.5 284.9 336.2 283.6C337.0 282.2 337.8 281.0 338.8 279.9C339.7 278.8 340.8 277.9 342.0 277.0C343.2 276.1 344.5 275.3 345.9 274.7C347.4 274.0 348.9 273.5 350.7 273.0C352.5 272.6 354.0 272.3 356.5 272.0C359.0 271.8 362.6 271.7 365.7 271.7C368.8 271.7 372.4 271.8 374.9 272.0C377.4 272.3 378.9 272.6 380.7 273.0C382.5 273.5 384.0 274.0 385.5 274.7C386.9 275.3 388.2 276.1 389.4 277.0C390.6 277.9 391.7 278.8 392.6 279.9C393.6 281.0 394.4 282.2 395.2 283.6C395.9 284.9 396.5 286.3 397.0 287.9C397.4 289.5 397.8 291.0 398.0 293.3C398.3 295.6 398.4 299.3 398.4 301.6Z" fill="none" stroke="#3a3a3a" stroke-width="0.8" stroke-opacity="0.8"/>
<circle cx="365.6" cy="292.3" r="1.7" fill="#f0900c"/>

</g>
<defs><clipPath id="cSide"><path d="M772.5 112.4C775.6 112.2 779.2 113.0 782.5 115.2C785.8 117.4 789.1 120.9 792.3 125.8C795.5 130.7 798.9 137.8 801.8 144.7C804.6 151.6 807.4 161.5 809.4 167.4C811.4 173.3 812.4 175.6 813.7 180.0C815.0 184.4 815.5 189.1 817.2 193.7C818.9 198.3 820.6 203.5 824.0 207.5C827.4 211.5 833.2 213.2 837.8 217.8C842.4 222.4 847.2 228.1 851.5 235.0C855.8 241.9 860.6 251.0 863.5 259.0C866.4 267.0 867.8 274.4 868.7 283.0C869.6 291.6 869.6 302.5 868.7 310.5C867.8 318.5 866.4 324.7 863.5 331.0C860.6 337.3 856.4 343.6 851.5 348.2C846.6 352.8 841.2 355.4 834.3 358.5C827.4 361.6 819.3 365.2 810.3 367.1C801.2 369.1 789.1 369.9 780.0 370.2C770.9 370.5 764.7 370.2 755.4 369.0C746.1 367.8 734.2 366.8 724.2 363.0C714.2 359.2 702.9 352.2 695.3 346.2C687.7 340.2 682.1 334.7 678.5 327.0C674.9 319.3 674.4 307.1 673.7 300.0C673.0 292.9 673.8 289.3 674.2 284.5C674.6 279.7 675.0 275.4 676.1 271.3C677.2 267.2 678.8 264.3 680.8 259.9C682.8 255.5 685.5 249.8 688.3 244.8C691.1 239.8 694.0 234.4 697.8 229.7C701.6 225.0 706.6 220.3 711.0 216.5C715.4 212.7 720.1 209.8 724.2 207.0C728.3 204.2 732.8 202.2 735.6 199.4C738.5 196.6 739.9 192.5 741.3 190.0C742.7 187.5 743.1 188.5 744.2 184.4C745.3 180.3 746.6 171.8 748.0 165.5C749.4 159.2 751.0 152.9 752.7 146.6C754.4 140.3 756.5 132.8 758.4 127.7C760.3 122.7 761.6 118.8 764.0 116.3C766.4 113.8 769.4 112.6 772.5 112.4Z"/></clipPath><clipPath id="cSnout"><path d="M684.0 271.0C681.1 266.5 678.3 272.3 674.8 273.2C671.3 274.1 666.8 274.8 663.2 276.3C659.6 277.9 655.7 280.4 653.2 282.5C650.8 284.6 649.5 286.6 648.5 288.7C647.5 290.8 647.0 292.8 647.0 294.9C647.0 297.0 647.5 298.8 648.5 301.1C649.5 303.4 651.3 306.2 653.2 308.8C655.1 311.4 657.7 314.2 660.1 316.5C662.5 318.8 665.3 320.9 667.9 322.7C670.5 324.5 672.9 326.2 675.6 327.4C678.3 328.6 681.3 334.6 684.0 330.0C686.7 325.4 692.0 309.8 692.0 300.0C692.0 290.2 686.9 275.5 684.0 271.0Z"/></clipPath><clipPath id="cSBody"><path d="M760.0 369.6C755.5 372.2 759.7 381.0 759.6 385.0C759.5 389.0 759.8 389.5 759.4 393.5C759.0 397.5 758.1 401.4 757.5 408.8C756.9 416.2 755.9 429.2 755.6 437.7C755.3 446.2 755.5 454.2 755.5 460.0C755.5 465.8 756.0 469.3 755.3 472.6C754.6 475.9 752.1 477.9 751.2 480.0C750.3 482.1 749.8 483.8 750.1 485.4C750.5 487.0 751.0 488.8 753.3 489.6C755.6 490.4 757.8 490.2 764.0 490.2C770.2 490.2 782.3 490.0 790.6 489.6C798.9 489.2 809.4 489.1 814.0 488.0C818.6 486.9 817.8 485.4 818.3 483.2C818.8 481.0 818.3 478.2 817.2 474.7C816.1 471.2 813.9 466.2 811.9 462.0C809.9 457.8 807.8 454.0 805.5 449.2C803.2 444.4 800.4 439.9 798.0 433.2C795.6 426.5 792.8 416.1 791.2 408.8C789.6 401.5 788.9 394.4 788.3 389.6C787.6 384.8 787.6 383.3 787.3 380.0C787.0 376.7 791.1 371.3 786.6 369.6C782.1 367.9 764.5 367.0 760.0 369.6Z"/></clipPath>
<radialGradient id="gSideR" gradientUnits="userSpaceOnUse" cx="740" cy="270" r="140"><stop offset="0" stop-color="#c08a78"/><stop offset="0.45" stop-color="#b4704a"/><stop offset="0.8" stop-color="#a35c34"/><stop offset="1" stop-color="#8e5234"/></radialGradient>
<linearGradient id="gSBody" gradientUnits="userSpaceOnUse" x1="750" y1="0" x2="822" y2="0"><stop offset="0" stop-color="#a3603a"/><stop offset="0.45" stop-color="#c27c4e"/><stop offset="1" stop-color="#a05c36"/></linearGradient></defs>
<g id="side">
<path d="M760.0 369.6C755.5 372.2 759.7 381.0 759.6 385.0C759.5 389.0 759.8 389.5 759.4 393.5C759.0 397.5 758.1 401.4 757.5 408.8C756.9 416.2 755.9 429.2 755.6 437.7C755.3 446.2 755.5 454.2 755.5 460.0C755.5 465.8 756.0 469.3 755.3 472.6C754.6 475.9 752.1 477.9 751.2 480.0C750.3 482.1 749.8 483.8 750.1 485.4C750.5 487.0 751.0 488.8 753.3 489.6C755.6 490.4 757.8 490.2 764.0 490.2C770.2 490.2 782.3 490.0 790.6 489.6C798.9 489.2 809.4 489.1 814.0 488.0C818.6 486.9 817.8 485.4 818.3 483.2C818.8 481.0 818.3 478.2 817.2 474.7C816.1 471.2 813.9 466.2 811.9 462.0C809.9 457.8 807.8 454.0 805.5 449.2C803.2 444.4 800.4 439.9 798.0 433.2C795.6 426.5 792.8 416.1 791.2 408.8C789.6 401.5 788.9 394.4 788.3 389.6C787.6 384.8 787.6 383.3 787.3 380.0C787.0 376.7 791.1 371.3 786.6 369.6C782.1 367.9 764.5 367.0 760.0 369.6Z" fill="url(#gSBody)"/>
<g clip-path="url(#cSBody)">
<path d="M755 365H790V381Q776 382.5 768 388Q763 391 755 396Z" fill="#dedede"/>
<path d="M758 376H790M758 382H778M764 369V391M770 369V388M776 369V384M782 369V382" stroke="#555" stroke-width="0.6" stroke-opacity="0.8"/>
<path d="M762.3 391.5C762.0 399.2 760.9 421.7 760.4 437.7C759.9 453.7 759.6 479.4 759.4 487.7M768.0 389.6C767.7 397.6 766.8 424.9 766.2 437.7C765.6 450.5 764.5 461.7 764.2 466.5M779.6 387.7C780.2 392.8 781.2 408.6 783.5 418.5C785.8 428.4 789.3 437.7 793.1 447.3C796.9 456.9 803.9 469.1 806.5 476.2C809.1 483.2 808.2 487.4 808.5 489.6M784.0 386.0C785.0 390.0 787.3 401.3 790.0 410.0C792.7 418.7 796.3 428.8 800.0 438.0C803.7 447.2 809.5 456.7 812.0 465.0C814.5 473.3 814.5 484.2 815.0 488.0M774.0 388.0C774.3 393.0 774.5 409.3 776.0 418.0C777.5 426.7 780.7 433.3 783.0 440.0C785.3 446.7 787.7 452.2 790.0 458.0C792.3 463.8 795.3 469.7 797.0 475.0C798.7 480.3 799.5 487.5 800.0 490.0M757.0 405.0C759.2 403.8 764.7 399.7 770.0 398.0C775.3 396.3 785.8 395.5 789.0 395.0M756.5 420.0C759.1 418.7 766.2 413.7 772.0 412.0C777.8 410.3 787.8 410.3 791.0 410.0M756.0 437.0C759.2 435.5 768.2 429.5 775.0 428.0C781.8 426.5 793.3 428.0 797.0 428.0M756.0 451.0C758.3 450.8 766.0 450.8 770.0 450.0C774.0 449.2 774.0 446.0 780.0 446.0C786.0 446.0 801.7 449.3 806.0 450.0M793.0 462.0L812.0 462.0M766.0 466.0C769.2 465.3 779.3 462.0 785.0 462.0C790.7 462.0 795.0 464.3 800.0 466.0C805.0 467.7 812.5 471.0 815.0 472.0M752.0 481.0C755.0 480.5 763.7 478.5 770.0 478.0C776.3 477.5 782.0 477.7 790.0 478.0C798.0 478.3 813.3 479.7 818.0 480.0M770.0 443.0C771.7 443.5 777.5 444.0 780.0 446.0C782.5 448.0 785.0 452.0 785.0 455.0C785.0 458.0 782.5 462.0 780.0 464.0C777.5 466.0 771.7 466.5 770.0 467.0M771.0 389.0C770.8 395.8 770.3 418.2 770.0 430.0C769.7 441.8 769.2 455.0 769.0 460.0M757.5 392.0C757.4 400.0 757.2 426.2 757.0 440.0C756.8 453.8 756.2 469.2 756.0 475.0M787.0 396.0C788.3 400.8 791.8 415.2 795.0 425.0C798.2 434.8 802.7 446.2 806.0 455.0C809.3 463.8 813.5 474.2 815.0 478.0M756.0 465.0C757.5 463.8 761.8 460.8 765.0 458.0C768.2 455.2 770.8 451.0 775.0 448.0C779.2 445.0 785.3 440.7 790.0 440.0C794.7 439.3 800.8 443.3 803.0 444.0M756.0 428.0C758.3 426.7 766.0 421.7 770.0 420.0C774.0 418.3 776.0 418.0 780.0 418.0C784.0 418.0 791.7 419.7 794.0 420.0M767.0 437.0C769.8 437.3 779.8 436.0 784.0 439.0C788.2 442.0 791.7 449.5 792.0 455.0C792.3 460.5 789.7 468.3 786.0 472.0C782.3 475.7 772.7 476.2 770.0 477.0" fill="none" stroke="#3a2418" stroke-width="0.7" stroke-opacity="0.8"/>
<path d="M769 458L766.5 480L773 479.5L771 460Z" fill="#4a4848"/><path d="M751 481Q758 476 765 482Q766 488 762 490.5H752Z" fill="#7a4a36" opacity="0.35"/>
</g>
<radialGradient id="gSnout" gradientUnits="userSpaceOnUse" cx="668" cy="293" r="30"><stop offset="0" stop-color="#e6e6e8"/><stop offset="0.7" stop-color="#d0d0d2"/><stop offset="1" stop-color="#9a9a9e"/></radialGradient>
<path d="M684.0 271.0C681.1 266.5 678.3 272.3 674.8 273.2C671.3 274.1 666.8 274.8 663.2 276.3C659.6 277.9 655.7 280.4 653.2 282.5C650.8 284.6 649.5 286.6 648.5 288.7C647.5 290.8 647.0 292.8 647.0 294.9C647.0 297.0 647.5 298.8 648.5 301.1C649.5 303.4 651.3 306.2 653.2 308.8C655.1 311.4 657.7 314.2 660.1 316.5C662.5 318.8 665.3 320.9 667.9 322.7C670.5 324.5 672.9 326.2 675.6 327.4C678.3 328.6 681.3 334.6 684.0 330.0C686.7 325.4 692.0 309.8 692.0 300.0C692.0 290.2 686.9 275.5 684.0 271.0Z" fill="url(#gSnout)"/>
<g clip-path="url(#cSnout)"><path d="M657.0 262.0C655.3 267.2 647.0 280.8 647.0 293.0C647.0 305.2 655.3 328.0 657.0 335.0M659.4 262.0C657.9 267.2 650.3 280.8 650.3 293.0C650.3 305.2 657.9 328.0 659.4 335.0M661.8 262.0C660.4 267.2 653.6 280.8 653.6 293.0C653.6 305.2 660.4 328.0 661.8 335.0M664.2 262.0C663.0 267.2 656.9 280.8 656.9 293.0C656.9 305.2 663.0 328.0 664.2 335.0M666.6 262.0C665.5 267.2 660.2 280.8 660.2 293.0C660.2 305.2 665.5 328.0 666.6 335.0M669.0 262.0C668.1 267.2 663.5 280.8 663.5 293.0C663.5 305.2 668.1 328.0 669.0 335.0M671.4 262.0C670.6 267.2 666.8 280.8 666.8 293.0C666.8 305.2 670.6 328.0 671.4 335.0M673.8 262.0C673.2 267.2 670.1 280.8 670.1 293.0C670.1 305.2 673.2 328.0 673.8 335.0M676.2 262.0C675.7 267.2 673.4 280.8 673.4 293.0C673.4 305.2 675.7 328.0 676.2 335.0M678.6 262.0C678.3 267.2 676.7 280.8 676.7 293.0C676.7 305.2 678.3 328.0 678.6 335.0M681.0 262.0C680.8 267.2 680.0 280.8 680.0 293.0C680.0 305.2 680.8 328.0 681.0 335.0M683.4 262.0C683.4 267.2 683.3 280.8 683.3 293.0C683.3 305.2 683.4 328.0 683.4 335.0M686.6 262.0C686.6 267.2 686.6 280.8 686.6 293.0C686.6 305.2 686.6 328.0 686.6 335.0M689.9 262.0C689.9 267.2 689.9 280.8 689.9 293.0C689.9 305.2 689.9 328.0 689.9 335.0M640.0 265.5C643.7 266.4 653.7 270.1 662.0 271.0C670.3 271.9 685.3 271.0 690.0 271.0M640.0 269.6C643.7 270.4 653.7 273.5 662.0 274.3C670.3 275.1 685.3 274.3 690.0 274.3M640.0 273.8C643.7 274.4 653.7 277.0 662.0 277.6C670.3 278.2 685.3 277.6 690.0 277.6M640.0 277.9C643.7 278.4 653.7 280.4 662.0 280.9C670.3 281.4 685.3 280.9 690.0 280.9M640.0 282.0C643.7 282.4 653.7 283.8 662.0 284.2C670.3 284.6 685.3 284.2 690.0 284.2M640.0 286.1C643.7 286.4 653.7 287.3 662.0 287.5C670.3 287.7 685.3 287.5 690.0 287.5M640.0 290.3C643.7 290.3 653.7 290.7 662.0 290.8C670.3 290.9 685.3 290.8 690.0 290.8M640.0 294.4C643.7 294.3 653.7 294.1 662.0 294.1C670.3 294.1 685.3 294.1 690.0 294.1M640.0 298.5C643.7 298.3 653.7 297.6 662.0 297.4C670.3 297.2 685.3 297.4 690.0 297.4M640.0 302.6C643.7 302.3 653.7 301.0 662.0 300.7C670.3 300.4 685.3 300.7 690.0 300.7M640.0 306.8C643.7 306.3 653.7 304.5 662.0 304.0C670.3 303.5 685.3 304.0 690.0 304.0M640.0 310.9C643.7 310.3 653.7 307.9 662.0 307.3C670.3 306.7 685.3 307.3 690.0 307.3M640.0 315.0C643.7 314.3 653.7 311.3 662.0 310.6C670.3 309.9 685.3 310.6 690.0 310.6M640.0 319.1C643.7 318.3 653.7 314.8 662.0 313.9C670.3 313.0 685.3 313.9 690.0 313.9M640.0 323.3C643.7 322.2 653.7 318.2 662.0 317.2C670.3 316.2 685.3 317.2 690.0 317.2M640.0 327.4C643.7 326.2 653.7 321.6 662.0 320.5C670.3 319.4 685.3 320.5 690.0 320.5M640.0 331.5C643.7 330.2 653.7 325.1 662.0 323.8C670.3 322.5 685.3 323.8 690.0 323.8M640.0 335.6C643.7 334.2 653.7 328.5 662.0 327.1C670.3 325.7 685.3 327.1 690.0 327.1M640.0 339.8C643.7 338.2 653.7 332.0 662.0 330.4C670.3 328.8 685.3 330.4 690.0 330.4" fill="none" stroke="#2a2a2a" stroke-width="0.65" stroke-opacity="0.8"/></g>
<path d="M684.0 271.0C681.1 266.5 678.3 272.3 674.8 273.2C671.3 274.1 666.8 274.8 663.2 276.3C659.6 277.9 655.7 280.4 653.2 282.5C650.8 284.6 649.5 286.6 648.5 288.7C647.5 290.8 647.0 292.8 647.0 294.9C647.0 297.0 647.5 298.8 648.5 301.1C649.5 303.4 651.3 306.2 653.2 308.8C655.1 311.4 657.7 314.2 660.1 316.5C662.5 318.8 665.3 320.9 667.9 322.7C670.5 324.5 672.9 326.2 675.6 327.4C678.3 328.6 681.3 334.6 684.0 330.0C686.7 325.4 692.0 309.8 692.0 300.0C692.0 290.2 686.9 275.5 684.0 271.0Z" fill="none" stroke="#333" stroke-width="0.7"/>
<linearGradient id="gSideH" gradientUnits="userSpaceOnUse" x1="672" y1="0" x2="872" y2="0"><stop offset="0" stop-color="#bf8574"/><stop offset="0.3" stop-color="#bf8874"/><stop offset="0.55" stop-color="#b57552"/><stop offset="0.85" stop-color="#9f5c36"/><stop offset="1" stop-color="#8a5034"/></linearGradient>
<linearGradient id="gSideV" gradientUnits="userSpaceOnUse" x1="0" y1="110" x2="0" y2="372"><stop offset="0" stop-color="#6a3a30" stop-opacity="0.25"/><stop offset="0.25" stop-color="#6a3a30" stop-opacity="0"/><stop offset="0.48" stop-color="#b0602a" stop-opacity="0"/><stop offset="0.8" stop-color="#b0602a" stop-opacity="0.35"/><stop offset="1" stop-color="#a0521e" stop-opacity="0.5"/></linearGradient>
<path d="M772.5 112.4C775.6 112.2 779.2 113.0 782.5 115.2C785.8 117.4 789.1 120.9 792.3 125.8C795.5 130.7 798.9 137.8 801.8 144.7C804.6 151.6 807.4 161.5 809.4 167.4C811.4 173.3 812.4 175.6 813.7 180.0C815.0 184.4 815.5 189.1 817.2 193.7C818.9 198.3 820.6 203.5 824.0 207.5C827.4 211.5 833.2 213.2 837.8 217.8C842.4 222.4 847.2 228.1 851.5 235.0C855.8 241.9 860.6 251.0 863.5 259.0C866.4 267.0 867.8 274.4 868.7 283.0C869.6 291.6 869.6 302.5 868.7 310.5C867.8 318.5 866.4 324.7 863.5 331.0C860.6 337.3 856.4 343.6 851.5 348.2C846.6 352.8 841.2 355.4 834.3 358.5C827.4 361.6 819.3 365.2 810.3 367.1C801.2 369.1 789.1 369.9 780.0 370.2C770.9 370.5 764.7 370.2 755.4 369.0C746.1 367.8 734.2 366.8 724.2 363.0C714.2 359.2 702.9 352.2 695.3 346.2C687.7 340.2 682.1 334.7 678.5 327.0C674.9 319.3 674.4 307.1 673.7 300.0C673.0 292.9 673.8 289.3 674.2 284.5C674.6 279.7 675.0 275.4 676.1 271.3C677.2 267.2 678.8 264.3 680.8 259.9C682.8 255.5 685.5 249.8 688.3 244.8C691.1 239.8 694.0 234.4 697.8 229.7C701.6 225.0 706.6 220.3 711.0 216.5C715.4 212.7 720.1 209.8 724.2 207.0C728.3 204.2 732.8 202.2 735.6 199.4C738.5 196.6 739.9 192.5 741.3 190.0C742.7 187.5 743.1 188.5 744.2 184.4C745.3 180.3 746.6 171.8 748.0 165.5C749.4 159.2 751.0 152.9 752.7 146.6C754.4 140.3 756.5 132.8 758.4 127.7C760.3 122.7 761.6 118.8 764.0 116.3C766.4 113.8 769.4 112.6 772.5 112.4Z" fill="url(#gSideH)"/><path d="M772.5 112.4C775.6 112.2 779.2 113.0 782.5 115.2C785.8 117.4 789.1 120.9 792.3 125.8C795.5 130.7 798.9 137.8 801.8 144.7C804.6 151.6 807.4 161.5 809.4 167.4C811.4 173.3 812.4 175.6 813.7 180.0C815.0 184.4 815.5 189.1 817.2 193.7C818.9 198.3 820.6 203.5 824.0 207.5C827.4 211.5 833.2 213.2 837.8 217.8C842.4 222.4 847.2 228.1 851.5 235.0C855.8 241.9 860.6 251.0 863.5 259.0C866.4 267.0 867.8 274.4 868.7 283.0C869.6 291.6 869.6 302.5 868.7 310.5C867.8 318.5 866.4 324.7 863.5 331.0C860.6 337.3 856.4 343.6 851.5 348.2C846.6 352.8 841.2 355.4 834.3 358.5C827.4 361.6 819.3 365.2 810.3 367.1C801.2 369.1 789.1 369.9 780.0 370.2C770.9 370.5 764.7 370.2 755.4 369.0C746.1 367.8 734.2 366.8 724.2 363.0C714.2 359.2 702.9 352.2 695.3 346.2C687.7 340.2 682.1 334.7 678.5 327.0C674.9 319.3 674.4 307.1 673.7 300.0C673.0 292.9 673.8 289.3 674.2 284.5C674.6 279.7 675.0 275.4 676.1 271.3C677.2 267.2 678.8 264.3 680.8 259.9C682.8 255.5 685.5 249.8 688.3 244.8C691.1 239.8 694.0 234.4 697.8 229.7C701.6 225.0 706.6 220.3 711.0 216.5C715.4 212.7 720.1 209.8 724.2 207.0C728.3 204.2 732.8 202.2 735.6 199.4C738.5 196.6 739.9 192.5 741.3 190.0C742.7 187.5 743.1 188.5 744.2 184.4C745.3 180.3 746.6 171.8 748.0 165.5C749.4 159.2 751.0 152.9 752.7 146.6C754.4 140.3 756.5 132.8 758.4 127.7C760.3 122.7 761.6 118.8 764.0 116.3C766.4 113.8 769.4 112.6 772.5 112.4Z" fill="url(#gSideV)"/>
<g clip-path="url(#cSide)"><path d="M765.8 116.2C765.4 121.8 764.5 136.6 763.6 149.6C762.7 162.6 761.4 180.1 760.3 194.3C759.2 208.5 757.8 225.8 756.9 234.9C756.0 244.0 755.5 240.7 754.8 249.0C754.1 257.4 753.0 276.5 752.6 285.0C752.2 293.5 752.0 290.8 752.1 300.0C752.2 309.2 752.5 328.3 753.0 340.0C753.5 351.7 755.0 365.0 755.4 370.0M760.3 125.1C759.2 131.1 755.6 148.5 753.6 160.8C751.6 173.1 749.9 187.9 748.0 198.8C746.1 209.7 744.0 217.6 742.0 226.0C740.0 234.4 737.4 236.7 735.8 249.0C734.2 261.3 732.7 285.7 732.2 300.0C731.7 314.3 732.0 323.7 733.0 335.0C734.0 346.3 737.2 362.5 738.0 368.0M741.3 200.4C738.8 201.5 729.8 201.7 726.1 207.0C722.4 212.3 720.7 223.2 719.0 232.0C717.3 240.8 716.6 248.7 716.0 260.0C715.4 271.3 715.1 288.3 715.1 300.0C715.1 311.7 714.9 319.3 716.0 330.0C717.1 340.7 721.0 358.3 722.0 364.0M712.9 216.5C711.4 220.8 706.0 233.9 704.0 242.0C702.0 250.1 701.5 255.3 701.0 265.0C700.5 274.7 700.5 289.2 700.7 300.0C700.9 310.8 700.6 320.3 702.0 330.0C703.4 339.7 707.8 353.3 709.0 358.0M701.6 227.8C699.8 231.8 693.3 245.0 691.0 252.0C688.7 259.0 688.6 262.0 688.0 270.0C687.4 278.0 686.9 290.8 687.1 300.0C687.3 309.2 687.5 317.0 689.0 325.0C690.5 333.0 694.8 344.2 696.0 348.0M783.7 116.2C784.1 121.8 785.1 136.6 785.9 149.6C786.6 162.6 787.5 180.1 788.2 194.3C789.0 208.5 789.7 225.8 790.4 234.9C791.1 244.0 792.5 238.2 792.6 249.0C792.7 259.9 791.2 284.8 790.8 300.0C790.4 315.2 790.5 328.2 790.0 340.0C789.5 351.8 788.3 365.8 788.0 371.0M791.5 125.1C792.6 129.2 796.0 138.8 798.2 149.6C800.4 160.4 803.0 175.6 804.9 189.8C806.8 204.0 808.4 225.0 809.4 234.9C810.4 244.8 810.6 238.2 810.7 249.0C810.8 259.9 810.2 284.8 809.8 300.0C809.3 315.2 808.8 328.5 808.0 340.0C807.2 351.5 805.5 364.2 805.0 369.0M801.6 146.3C803.3 150.6 808.7 163.1 811.6 172.0C814.5 180.9 817.7 190.7 818.9 200.0C820.1 209.3 820.3 220.4 818.9 228.1C817.5 235.8 812.0 243.0 810.6 246.0M818.9 228.1C820.2 231.6 825.3 237.0 826.9 249.0C828.5 261.0 828.9 285.7 828.7 300.0C828.6 314.3 827.8 324.3 826.0 335.0C824.2 345.7 819.3 359.2 818.0 364.0M821.6 208.9C823.2 210.7 828.7 215.1 831.2 219.9C833.7 224.7 835.1 231.0 836.7 237.7C838.3 244.4 839.8 249.6 840.9 260.0C842.0 270.4 843.2 288.3 843.1 300.0C843.0 311.7 841.9 320.0 840.0 330.0C838.1 340.0 833.3 355.0 832.0 360.0M827.1 213.0C828.7 215.1 833.7 220.6 836.7 225.4C839.7 230.2 842.5 236.1 845.0 241.9C847.5 247.7 850.1 250.3 851.9 260.0C853.7 269.7 855.7 288.3 855.7 300.0C855.7 311.7 853.6 321.7 852.0 330.0C850.4 338.3 847.0 346.7 846.0 350.0M834.0 218.5C835.8 220.8 841.6 227.2 845.0 232.2C848.4 237.2 851.9 242.4 854.6 248.7C857.3 255.0 859.3 261.4 861.0 270.0C862.7 278.6 864.8 290.8 864.8 300.0C864.8 309.2 861.6 320.8 861.0 325.0M757.0 131.0C759.8 130.8 768.1 130.8 773.7 130.0C779.3 129.2 787.6 126.8 790.4 126.2M750.2 150.8C754.1 151.9 765.3 158.2 773.7 157.5C782.1 156.8 796.0 148.2 800.4 146.3M744.6 180.9C749.5 182.9 762.7 194.5 773.7 193.2C784.7 191.9 804.4 176.4 810.5 173.1M740.2 209.9C742.8 211.9 750.4 219.2 756.0 222.0C761.6 224.8 767.2 227.0 773.7 226.7C780.2 226.4 787.7 223.9 795.0 220.0C802.3 216.1 813.8 206.2 817.5 203.4M680.8 259.9C684.0 258.8 694.3 254.7 700.0 253.0C705.7 251.3 709.0 252.0 715.1 250.0C721.2 248.0 730.1 241.2 736.7 241.0C743.3 240.8 748.6 247.2 754.8 249.1C761.0 251.0 767.4 252.2 773.7 252.7C780.0 253.1 786.4 252.7 792.6 251.8C798.8 250.9 807.7 248.1 810.7 247.3M818.9 228.1C819.6 229.2 820.5 233.3 823.0 235.0C825.5 236.7 829.9 238.4 834.0 238.4C838.1 238.4 844.0 236.2 847.7 235.0C851.4 233.8 854.6 231.6 856.0 230.9M790.0 251.5C793.4 250.8 803.7 247.4 810.6 247.4C817.5 247.4 825.0 251.3 831.2 251.5C837.4 251.7 842.7 248.9 847.7 248.7C852.7 248.4 859.0 249.8 861.2 250.0M670.0 267.5C679.0 267.3 706.8 265.7 724.1 266.2C741.4 266.7 757.2 270.5 773.7 270.7C790.2 270.9 806.9 267.9 823.3 267.1C839.7 266.4 863.9 266.4 872.0 266.2M670.0 284.3C679.0 284.1 706.8 283.2 724.1 283.4C741.4 283.5 757.2 285.2 773.7 285.2C790.2 285.2 806.9 283.7 823.3 283.4C839.7 283.1 863.9 283.4 872.0 283.4M670.0 301.5C679.0 301.4 706.7 301.2 724.0 301.2C741.3 301.2 757.2 301.7 773.7 301.7C790.2 301.7 806.6 301.2 823.0 301.2C839.4 301.2 863.8 301.4 872.0 301.5M670.0 316.0C679.0 316.4 706.7 317.9 724.0 318.3C741.3 318.7 757.2 318.5 773.7 318.5C790.2 318.5 806.6 318.8 823.0 318.3C839.4 317.8 863.8 316.0 872.0 315.5M676.0 326.0C680.0 326.8 689.3 329.8 700.0 331.0C710.7 332.2 727.7 333.1 740.0 333.5C752.3 333.9 762.0 333.6 773.7 333.5C785.4 333.4 797.3 333.4 810.0 333.0C822.7 332.6 840.0 332.2 850.0 331.0C860.0 329.8 866.7 326.8 870.0 326.0M686.0 338.0C689.2 339.0 696.0 342.6 705.0 344.0C714.0 345.4 728.5 346.1 740.0 346.5C751.5 346.9 762.0 346.6 773.7 346.5C785.4 346.4 798.1 346.6 810.0 346.2C821.9 345.8 836.3 345.5 845.0 344.0C853.7 342.5 859.2 338.2 862.0 337.0M700.0 350.0C703.3 350.8 711.7 353.8 720.0 355.0C728.3 356.2 741.0 357.1 750.0 357.5C759.0 357.9 765.4 357.5 773.7 357.5C782.0 357.5 790.6 357.9 800.0 357.5C809.4 357.1 822.0 356.4 830.0 355.0C838.0 353.6 845.0 350.0 848.0 349.0M718.0 360.0C722.5 360.8 735.7 364.0 745.0 365.0C754.3 366.0 763.7 366.0 773.7 366.0C783.7 366.0 796.0 366.0 805.0 365.0C814.0 364.0 824.2 360.8 828.0 360.0M744.0 186.0C743.5 188.4 744.3 196.9 741.3 200.4C738.3 203.9 730.8 204.3 726.1 207.0C721.4 209.7 717.0 213.0 712.9 216.5C708.8 220.0 705.1 223.7 701.6 227.8C698.1 231.9 695.0 236.5 692.1 241.0C689.2 245.5 685.4 252.7 684.0 255.0M739.0 214.0C736.2 215.0 727.4 217.9 722.4 220.2C717.4 222.5 713.2 225.0 709.1 227.8C705.0 230.6 701.3 233.7 697.8 237.2C694.3 240.7 691.3 244.5 688.3 248.6C685.3 252.7 681.4 259.8 680.0 262.0M735.6 237.2C732.8 237.5 724.0 237.8 718.6 239.1C713.2 240.4 708.2 242.6 703.5 244.8C698.8 247.0 694.0 249.6 690.2 252.4C686.4 255.2 682.4 260.2 680.8 261.8" fill="none" stroke="#3a2418" stroke-width="0.7" stroke-opacity="0.8"/></g>
<path d="M772.5 112.4C775.6 112.2 779.2 113.0 782.5 115.2C785.8 117.4 789.1 120.9 792.3 125.8C795.5 130.7 798.9 137.8 801.8 144.7C804.6 151.6 807.4 161.5 809.4 167.4C811.4 173.3 812.4 175.6 813.7 180.0C815.0 184.4 815.5 189.1 817.2 193.7C818.9 198.3 820.6 203.5 824.0 207.5C827.4 211.5 833.2 213.2 837.8 217.8C842.4 222.4 847.2 228.1 851.5 235.0C855.8 241.9 860.6 251.0 863.5 259.0C866.4 267.0 867.8 274.4 868.7 283.0C869.6 291.6 869.6 302.5 868.7 310.5C867.8 318.5 866.4 324.7 863.5 331.0C860.6 337.3 856.4 343.6 851.5 348.2C846.6 352.8 841.2 355.4 834.3 358.5C827.4 361.6 819.3 365.2 810.3 367.1C801.2 369.1 789.1 369.9 780.0 370.2C770.9 370.5 764.7 370.2 755.4 369.0C746.1 367.8 734.2 366.8 724.2 363.0C714.2 359.2 702.9 352.2 695.3 346.2C687.7 340.2 682.1 334.7 678.5 327.0C674.9 319.3 674.4 307.1 673.7 300.0C673.0 292.9 673.8 289.3 674.2 284.5C674.6 279.7 675.0 275.4 676.1 271.3C677.2 267.2 678.8 264.3 680.8 259.9C682.8 255.5 685.5 249.8 688.3 244.8C691.1 239.8 694.0 234.4 697.8 229.7C701.6 225.0 706.6 220.3 711.0 216.5C715.4 212.7 720.1 209.8 724.2 207.0C728.3 204.2 732.8 202.2 735.6 199.4C738.5 196.6 739.9 192.5 741.3 190.0C742.7 187.5 743.1 188.5 744.2 184.4C745.3 180.3 746.6 171.8 748.0 165.5C749.4 159.2 751.0 152.9 752.7 146.6C754.4 140.3 756.5 132.8 758.4 127.7C760.3 122.7 761.6 118.8 764.0 116.3C766.4 113.8 769.4 112.6 772.5 112.4Z" fill="none" stroke="#4a2a1a" stroke-width="0.8" stroke-opacity="0.5"/>
<path d="M690.3 267.8C689.3 265.9 685.6 268.4 683.3 269.3C681.0 270.2 677.9 271.2 676.4 273.2C674.9 275.1 674.1 278.2 674.0 281.0C673.9 283.8 674.6 287.6 675.6 290.2C676.6 292.8 678.7 295.1 680.2 296.4C681.8 297.7 683.9 298.5 684.9 298.0C685.9 297.5 685.6 296.1 686.4 293.3C687.2 290.5 688.9 285.2 689.5 281.0C690.1 276.8 691.3 269.8 690.3 267.8Z" fill="#2e2e2e"/>
<path d="M676 275H690M674 280H690M674 285H690M675 290H690M678 295H688M679 269V297M683 269V298M687 269V298" stroke="#555" stroke-width="0.5" stroke-opacity="0.6"/>
</g>
<rect x="773" y="109" width="1.4" height="384" fill="#1c1c1c"/>
<path d="M749.3 301H767.8M780.2 301H798.7" stroke="#6a4428" stroke-width="2" opacity="0.75"/>
<circle cx="774.1" cy="300.6" r="12.6" fill="none" stroke="#ffffff" stroke-width="1.7"/>
<circle cx="774.1" cy="300.6" r="12.6" fill="none" stroke="#e8202a" stroke-width="1.7" stroke-dasharray="4.95 4.95" stroke-dashoffset="2"/>
<circle cx="774" cy="301" r="2.4" fill="#f09a18" stroke="#2a2a2a" stroke-width="0.9"/>
<circle cx="774.4" cy="291.8" r="1.2" fill="#d08a30" opacity="0.8"/>

<g id="toolbar">
<path d="M0 -5H40V131A4 4 0 0 1 36 135H0Z" fill="#282828"/>
<rect x="0" y="6" width="40" height="1" fill="#383838"/>
<rect x="0" y="49" width="40" height="1" fill="#383838"/>
<rect x="0" y="92" width="40" height="1" fill="#383838"/>
<path d="M0 143H36A4 4 0 0 1 40 147V222A4 4 0 0 1 36 226.5H0Z" fill="#282828"/>
<rect x="0" y="184" width="40" height="1" fill="#383838"/>
<path d="M0 235H36A4 4 0 0 1 40 239V271.5A4 4 0 0 1 36 275.5H0Z" fill="#282828"/>
<!-- rotate -->
<g fill="none" stroke="#dedede" stroke-width="1.4">
<path d="M4.6 25.6A11.5 11.5 0 0 1 24 19.6"/>
<path d="M27.3 30.4A11.5 11.5 0 0 1 7.9 35.9"/>
</g>
<path d="M1.4 26.8H8.3L4.9 32.2Z" fill="#e0e0e0"/>
<path d="M23.6 28.8H30.2L26.9 23.6Z" fill="#e0e0e0"/>
<path d="M15.9 23.5L20.3 27.9L15.9 32.3L11.5 27.9Z" fill="#a6a6a6"/>
<!-- scale -->
<path d="M6.2 68.6V61.2H26V80.4H18" fill="none" stroke="#bdbdbd" stroke-width="1.3"/>
<rect x="4.9" y="71" width="11.3" height="10.8" fill="#e4e4e4"/>
<path d="M16.9 70.2L21 66.1" stroke="#e0e0e0" stroke-width="1.4"/>
<path d="M23.4 63.5L19.2 64.6L22.3 67.7Z" fill="#e0e0e0"/>
<path d="M37.2 84.8V89.4H32.4Z" fill="#8a8a8a"/>
<!-- transform -->
<g fill="none" stroke="#dedede" stroke-width="1.4">
<path d="M3.9 111A12.4 12.4 0 0 1 12.8 102"/>
<path d="M19.2 102A12.4 12.4 0 0 1 28.1 111"/>
<path d="M28.1 117A12.4 12.4 0 0 1 19.2 126"/>
<path d="M12.8 126A12.4 12.4 0 0 1 3.9 117"/>
</g>
<rect x="11" y="109" width="10" height="10" fill="#e4e4e4"/>
<path d="M16 100.3L19 105.6H13Z M16 127.6L19 122.3H13Z M2.5 114L8 110.9V117.1Z M29.5 114L24 110.9V117.1Z" fill="#dcdcdc"/>
<!-- annotate -->
<g transform="translate(11.2 161) rotate(-45)">
<path d="M-9 -2.25H11.5A2.25 2.25 0 0 1 13.75 0A2.25 2.25 0 0 1 11.5 2.25H-9L-13.8 0Z" fill="#e4e4e4"/>
<rect x="8.7" y="-2.5" width="0.9" height="5" fill="#282828"/>
<rect x="-8.6" y="-2.5" width="0.9" height="5" fill="#282828"/>
</g>
<path d="M2.8 171.7C5.5 174.5 10 175.2 13.5 172.8C17 170.5 19.5 166 23.5 165.9C27 165.8 30 168.5 31.5 171.6" fill="none" stroke="#7ed3a0" stroke-width="1.3"/>
<path d="M37.2 176.8V181.6H32.4Z" fill="#8a8a8a"/>
<!-- measure -->
<path d="M4.6 192H11.8V216.4H30.6V220.8H4.6V220H6.2V193H4.6Z" fill="#e6e6e6"/>
<path d="M11.75 202.6A13.8 13.8 0 0 1 25.55 216.4" fill="none" stroke="#86d4a8" stroke-width="1.3"/>
<path d="M11.75 204.4A12 12 0 0 1 23.75 216.4H11.75Z" fill="#86d4a8"/>
<g stroke="#282828" stroke-width="0.6">
<path d="M9.2 194.2H11.8M9.2 195.7H11.8M9.2 197.2H11.8M8.2 198.7H11.8M9.2 200.2H11.8M9.2 201.7H11.8M9.2 203.2H11.8M8.2 204.7H11.8M9.2 206.2H11.8M9.2 207.7H11.8M9.2 209.2H11.8M8.2 210.7H11.8M9.2 212.2H11.8M9.2 213.7H11.8"/>
<path d="M13 216.4V218.4M14.5 216.4V218.4M16 216.4V218.4M17.5 216.4V219.2M19 216.4V218.4M20.5 216.4V218.4M22 216.4V218.4M23.5 216.4V219.2M25 216.4V218.4M26.5 216.4V218.4M28 216.4V218.4M29.5 216.4V218.4"/>
</g>
<!-- add cube -->
<g fill="none" stroke="#7cc89e" stroke-width="1.2">
<path d="M7.2 251.5H24.4V268.3H7.2Z"/>
<path d="M7.2 251.5L13.1 245.6H29.9V262.8L24.4 268.3M24.4 251.5L29.9 245.6"/>
</g>
<path d="M0 243.9H9.6M4.8 239.1V248.7" stroke="#8ad8ac" stroke-width="1.7"/>
<path d="M37.5 268.6V273.5H32.3Z" fill="#8a8a8a"/>
</g>

</svg>
</body></html>
